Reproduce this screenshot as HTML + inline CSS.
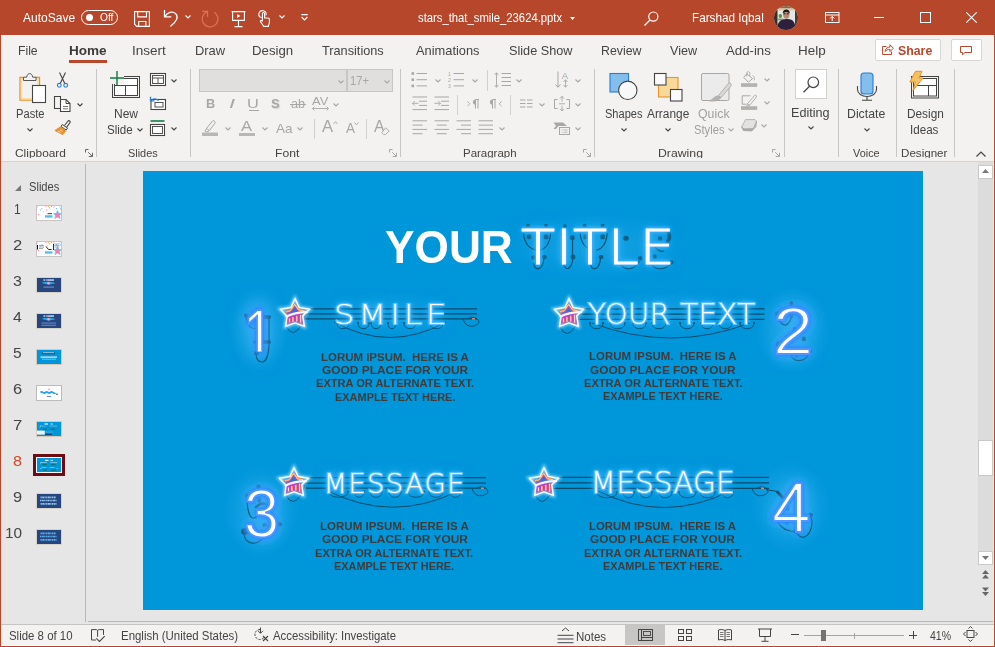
<!DOCTYPE html>
<html lang="en">
<head>
<meta charset="utf-8">
<title>stars_that_smile_23624.pptx - PowerPoint</title>
<style>
html,body{margin:0;padding:0;}
body{width:995px;height:647px;overflow:hidden;background:#f3f2f1;font-family:"Liberation Sans",sans-serif;color:#444;}
#win{position:relative;width:995px;height:647px;overflow:hidden;background:#f3f2f1;}
.abs{position:absolute;}
.t{position:absolute;white-space:nowrap;line-height:1;transform-origin:0 0;color:#444;}
svg{position:absolute;overflow:visible;}
#titlebar{position:absolute;left:0;top:0;width:995px;height:35px;background:#b7472a;}
#titlebar .t{color:#fff;}
#tabs{position:absolute;left:1px;top:35px;width:993px;height:32px;background:#f3f2f1;}
#ribbon{position:absolute;left:1px;top:67px;width:993px;height:94px;background:#f3f2f1;}
#work{position:absolute;left:1px;top:162px;width:993px;height:462px;background:#e6e6e6;}
#slide{position:absolute;left:143px;top:171px;width:780px;height:439px;background:#0096da;overflow:hidden;}
#status{position:absolute;left:1px;top:624px;width:993px;height:22px;background:#f3f2f1;}
.edge{position:absolute;background:#b7472a;}
</style>
</head>
<body>
<div id="win">

<!-- TITLE BAR -->
<div id="titlebar">
<span class="t" style="left:23.48px;top:11.00px;font-size:13px;transform:scaleX(0.9234);color:#fff;">AutoSave</span>
<div class="abs" style="left:81px;top:9.5px;width:35px;height:13px;border:1.2px solid #fff;border-radius:8px;"></div>
<div class="abs" style="left:85.5px;top:13.5px;width:7px;height:7px;background:#fff;border-radius:50%;"></div>
<span class="t" style="left:99.52px;top:11.69px;font-size:11px;transform:scaleX(0.9298);color:#fff;">Off</span>
<svg style="left:134px;top:11px" width="16" height="16" viewBox="0 0 16 16" fill="none" stroke="#fff" stroke-width="1.100"><path d="M0.600 0.600H15.400V15.400H2.800L0.600 13.200Z"/><path d="M3.700 0.600v5.300h8.800v-5.300"/><path d="M4.700 15.400v-4.900h7.200v4.900"/></svg>
<svg style="left:163px;top:9px" width="18" height="18" viewBox="0 0 18 18" fill="none" stroke="#fff" stroke-width="1.3" stroke-linecap="round" stroke-linejoin="round"><path d="M1.5 1.5v6.3h6.3"/><path d="M1.8 7.6C4.2 3.3 9.5 1.6 12.6 4.6c3 3 1.6 7.6-4.8 12.4"/></svg>
<svg style="left:185px;top:15px" width="6" height="4" viewBox="0 0 6 4" fill="none"><path d="M0.5 0.5l2.5 2.5l2.5-2.5" stroke="#fff" stroke-width="1.1"/></svg>
<svg style="left:202px;top:9px" width="17" height="18" viewBox="0 0 17 18" fill="none" stroke="#e0705a" stroke-width="1.200" stroke-linecap="butt" stroke-linejoin="miter"><path d="M12.300 3.300A7.900 7.900 0 1 1 5.500 2.500"/><path d="M0.300 2.400H5.500V7.800"/></svg>
<svg style="left:231px;top:10.5px" width="15" height="17" viewBox="0 0 15 17" fill="none" stroke="#fff" stroke-width="1.1"><path d="M0.6 0.6h13.8M1.6 0.6v8.8h11.8v-8.8M7.5 9.4v6M3.5 15.6h8"/><path d="M6.2 3v4l3.2-2z" fill="#fff" stroke="none"/></svg>
<svg style="left:258px;top:9px" width="12" height="18" viewBox="0 0 12 18" fill="none" stroke="#fff" stroke-width="1.1" stroke-linecap="round" stroke-linejoin="round"><path d="M3.2 8.6A3.6 3.6 0 1 1 8 6"/><path d="M4.4 12V4.6a1.1 1.1 0 0 1 2.2 0V9h3.2a1.6 1.6 0 0 1 1.6 1.6V13c0 2-1 3.4-1 4.4H5.6C5 15.6 3 13.8 2.4 12.600c-0.400-1 1-1.600 2-0.600z"/></svg>
<svg style="left:279px;top:15px" width="6" height="4" viewBox="0 0 6 4" fill="none"><path d="M0.5 0.5l2.5 2.5l2.5-2.5" stroke="#fff" stroke-width="1.1"/></svg>
<svg style="left:301px;top:14px" width="7" height="7" viewBox="0 0 7 7" fill="none" stroke="#fff" stroke-width="1.1"><path d="M0.3 0.6h6.4M0.6 3l2.9 2.9L6.4 3"/></svg>
<span class="t" style="left:418.00px;top:11.00px;font-size:13px;transform:scaleX(0.8670);color:#fff;">stars_that_smile_23624.pptx</span>
<svg style="left:570px;top:17px" width="5" height="3" viewBox="0 0 5 3" fill="none"><path d="M0 0h5L2.5 3z" fill="#fff"/></svg>
<svg style="left:644px;top:11px" width="15" height="15" viewBox="0 0 15 15" fill="none" stroke="#fff" stroke-width="1.2"><circle cx="9.3" cy="5.6" r="4.6"/><path d="M6 9l-5.5 5.5"/></svg>
<span class="t" style="left:692.04px;top:11.00px;font-size:13px;transform:scaleX(0.9024);color:#fff;">Farshad Iqbal</span>
<svg style="left:774px;top:6px" width="24" height="24" viewBox="0 0 24 24" fill="none"><defs><clipPath id="av"><circle cx="12" cy="12" r="12"/></clipPath></defs><g clip-path="url(#av)"><rect width="24" height="24" fill="#e4e8e4"/><rect width="24" height="2.500" fill="#8a6a48"/><rect y="2.500" width="24" height="2" fill="#d8c9a6"/><rect x="0" y="4" width="3.500" height="20" fill="#3c2c22"/><rect x="21" y="4" width="3" height="20" fill="#4a3a30"/><ellipse cx="6.300" cy="10" rx="1.800" ry="2" fill="#5f8a4a"/><rect x="3.500" y="12.500" width="6" height="2" fill="#7da06a"/><path d="M3 24c0-8 3-10.500 9.500-11s9 3 9 11z" fill="#2e1f3d"/><ellipse cx="12.300" cy="8.600" rx="3.200" ry="4.200" fill="#b48a72"/><path d="M8.800 7.500c-0.500-5.500 7.500-5.500 7 0c-1.500-2-5.500-2-7 0z" fill="#17171c"/><rect x="9.500" y="7.300" width="2" height="1" fill="#2a2024"/><rect x="12.800" y="7.300" width="2" height="1" fill="#2a2024"/></g></svg>
<svg style="left:825px;top:12px" width="15" height="11" viewBox="0 0 15 11" fill="none" stroke="#fff" stroke-width="1"><rect x="0.5" y="0.5" width="13.5" height="10"/><path d="M0.5 3h13.5"/><path d="M7.2 9V4.600M5.200 6.400l2-2l2 2"/></svg>
<div class="abs" style="left:874px;top:17px;width:10px;height:1px;background:#fff;"></div>
<div class="abs" style="left:920px;top:12px;width:9px;height:9px;border:1px solid #fff;"></div>
<svg style="left:966px;top:12px" width="11" height="11" viewBox="0 0 11 11" stroke="#fff" stroke-width="1.1"><path d="M0.3 0.3l10.4 10.4M10.7 0.3L0.3 10.7"/></svg>
</div>

<!-- TABS -->
<div id="tabs">
<span class="t" style="left:16.50px;top:9.20px;font-size:13px;transform:scaleX(0.9376);">File</span>
<span class="t" style="left:67.81px;top:9.20px;font-size:13px;transform:scaleX(1.0427);color:#3b3a39;font-weight:bold;">Home</span>
<div class="abs" style="left:68px;top:25px;width:38px;height:2.5px;background:#b7472a;"></div>
<span class="t" style="left:131.26px;top:9.20px;font-size:13px;transform:scaleX(1.0408);">Insert</span>
<span class="t" style="left:193.54px;top:9.20px;font-size:13px;transform:scaleX(0.9931);">Draw</span>
<span class="t" style="left:251.32px;top:9.20px;font-size:13px;transform:scaleX(1.0163);">Design</span>
<span class="t" style="left:321.22px;top:9.20px;font-size:13px;transform:scaleX(0.9784);">Transitions</span>
<span class="t" style="left:414.57px;top:9.20px;font-size:13px;transform:scaleX(0.9872);">Animations</span>
<span class="t" style="left:508.43px;top:9.20px;font-size:13px;transform:scaleX(0.9753);">Slide Show</span>
<span class="t" style="left:600.49px;top:9.20px;font-size:13px;transform:scaleX(0.9495);">Review</span>
<span class="t" style="left:668.95px;top:9.20px;font-size:13px;transform:scaleX(0.9705);">View</span>
<span class="t" style="left:725.27px;top:9.20px;font-size:13px;transform:scaleX(1.0163);">Add-ins</span>
<span class="t" style="left:797.40px;top:9.20px;font-size:13px;transform:scaleX(1.0341);">Help</span>
<div class="abs" style="left:873.5px;top:4px;width:66px;height:22px;background:#fff;border:1px solid #d8d6d4;border-radius:2px;box-sizing:border-box;"></div>
<svg style="left:881px;top:9px" width="12" height="11" viewBox="0 0 12 11" fill="none" stroke="#b7472a" stroke-width="1" stroke-linejoin="round"><path d="M4.5 2.5H0.6v8h9v-3"/><path d="M3 7.500c0.500-3 2.500-4.500 5-4.500V0.800l3.400 3.400L8 7.600V5.400c-2 0-3.800 0.600-5 2.100z"/></svg>
<span class="t" style="left:896.95px;top:9.20px;font-size:13px;transform:scaleX(0.9484);color:#b7472a;font-weight:bold;">Share</span>
<div class="abs" style="left:949.5px;top:4px;width:31px;height:22px;background:#fff;border:1px solid #d8d6d4;border-radius:2px;box-sizing:border-box;"></div>
<svg style="left:959px;top:11px" width="12" height="9" viewBox="0 0 12 9" fill="none" stroke="#b7472a" stroke-width="1" stroke-linejoin="round"><path d="M0.5 0.500h11v6h-6.500l-2.500 2.200v-2.200h-2z"/></svg>
</div>

<!-- RIBBON -->
<div id="ribbon">
<div class="abs" style="left:95px;top:2px;width:1px;height:88px;background:#c8c6c4;"></div>
<div class="abs" style="left:189px;top:2px;width:1px;height:88px;background:#c8c6c4;"></div>
<div class="abs" style="left:399px;top:2px;width:1px;height:88px;background:#c8c6c4;"></div>
<div class="abs" style="left:593px;top:2px;width:1px;height:88px;background:#c8c6c4;"></div>
<div class="abs" style="left:783px;top:2px;width:1px;height:88px;background:#c8c6c4;"></div>
<div class="abs" style="left:837px;top:2px;width:1px;height:88px;background:#c8c6c4;"></div>
<div class="abs" style="left:895px;top:2px;width:1px;height:88px;background:#c8c6c4;"></div>
<div class="abs" style="left:953px;top:2px;width:1px;height:88px;background:#c8c6c4;"></div>
<svg style="left:18px;top:6px" width="27" height="30" viewBox="0 0 27 30" fill="none">
<path d="M4 4.500H1V27.200H13" stroke="#e8912d" stroke-width="1.300"/>
<path d="M4 6H2.500V25.800H13" stroke="#fbdc9c" stroke-width="1.400"/>
<path d="M17 4.500h3.500V12" stroke="#e8912d" stroke-width="1.300"/>
<path d="M17 6h2V12" stroke="#fbdc9c" stroke-width="1.400"/>
<path d="M4.500 7.500V4.200h3.200C8 1.800 9.200 0.600 10.700 0.600S13.400 1.800 13.700 4.200H17V7.500z" stroke="#555" stroke-width="1" fill="#f3f2f1"/>
<rect x="13.500" y="12.500" width="13" height="17" stroke="#444" stroke-width="1.100" fill="#fff"/></svg>
<span class="t" style="left:14.79px;top:40.54px;font-size:12px;transform:scaleX(0.9290);">Paste</span>
<svg style="left:26px;top:61px" width="6" height="4" viewBox="0 0 6 4" fill="none"><path d="M0.5 0.5l2.5 2.5l2.5-2.5" stroke="#444" stroke-width="1.1"/></svg>
<svg style="left:56px;top:5px" width="11" height="16" viewBox="0 0 11 16" fill="none"><path d="M2.500 0.500L7.800 11.500M8.500 0.500L3.200 11.500" stroke="#444" stroke-width="1.100"/>
<circle cx="2.300" cy="13.300" r="1.900" stroke="#2b7cd3" stroke-width="1.100"/><circle cx="8.700" cy="13.300" r="1.900" stroke="#2b7cd3" stroke-width="1.100"/></svg>
<svg style="left:53px;top:29px" width="17" height="16" viewBox="0 0 17 16" fill="none"><path d="M6.500 3V0.500H0.500V12.500H6" stroke="#444" stroke-width="1.100"/>
<path d="M6.500 3.500h5.500l4 4v8h-9.500z" stroke="#444" stroke-width="1.100" fill="#fff"/><path d="M12 3.500v4h4" stroke="#444" stroke-width="1"/>
<path d="M9 10.500h5M9 12.800h5" stroke="#666" stroke-width="0.900"/></svg>
<svg style="left:76px;top:35.5px" width="6" height="4" viewBox="0 0 6 4" fill="none"><path d="M0.5 0.5l2.5 2.5l2.5-2.5" stroke="#444" stroke-width="1.1"/></svg>
<svg style="left:53px;top:53px" width="17" height="15" viewBox="0 0 17 15" fill="none"><path d="M10.500 5.500l3.500-4.500c1-1 2.800 0.400 2 1.600l-3.300 4.700" stroke="#444" stroke-width="1.100"/>
<path d="M8.300 4.500l5.200 3.600-1.300 2-5.200-3.600z" stroke="#444" stroke-width="1" fill="#f3f2f1"/>
<path d="M6.500 6.800L0.800 10.500l8 4.200l3-4z" fill="#e8912d" stroke="#e8912d" stroke-width="0.800" stroke-linejoin="round"/>
<path d="M4 11l2.500 1.500M6 9.800l2.500 1.500" stroke="#f3f2f1" stroke-width="0.700"/></svg>
<span class="t" style="left:14.10px;top:81.07px;font-size:11.5px;transform:scaleX(1.0353);">Clipboard</span>
<svg style="left:84px;top:82px" width="8" height="8" viewBox="0 0 8 8" fill="none" stroke="#666" stroke-width="1"><path d="M0.5 3.500V0.500H3.500M3.200 3.200L7.200 7.200M7.500 3.800v3.700H3.800"/></svg>
<svg style="left:109px;top:4px" width="30" height="28" viewBox="0 0 30 28" fill="none"><rect x="2.500" y="5.500" width="27" height="21" stroke="#444" stroke-width="1"/>
<rect x="4.500" y="7.500" width="23" height="17" stroke="#444" stroke-width="1" fill="#fff"/>
<path d="M4.500 14.500h23M15.500 14.500v10" stroke="#444" stroke-width="1"/>
<rect x="0" y="0" width="14" height="13" fill="#f3f2f1" stroke="none"/>
<path d="M7 0v14M0 7h14" stroke="#107c41" stroke-width="1.400"/></svg>
<span class="t" style="left:112.61px;top:40.54px;font-size:12px;transform:scaleX(1.0021);">New</span>
<span class="t" style="left:106.48px;top:56.64px;font-size:12px;transform:scaleX(0.9641);">Slide</span>
<svg style="left:136px;top:61px" width="6" height="4" viewBox="0 0 6 4" fill="none"><path d="M0.5 0.5l2.5 2.5l2.5-2.5" stroke="#444" stroke-width="1.1"/></svg>
<svg style="left:149px;top:6px" width="16" height="13" viewBox="0 0 16 13" fill="none"><rect x="0.500" y="0.500" width="15" height="12" stroke="#444" stroke-width="1.100" fill="#fff"/>
<rect x="2.500" y="2.500" width="11" height="8" stroke="#444" stroke-width="0.900"/><path d="M2.500 5h11M8 5v5.500" stroke="#444" stroke-width="0.900"/></svg>
<svg style="left:170px;top:12px" width="6" height="4" viewBox="0 0 6 4" fill="none"><path d="M0.5 0.5l2.5 2.5l2.5-2.5" stroke="#444" stroke-width="1.1"/></svg>
<svg style="left:149px;top:29px" width="16" height="14" viewBox="0 0 16 14" fill="none"><rect x="1" y="3.500" width="14.500" height="10" stroke="#444" stroke-width="1.100" fill="#fff"/>
<rect x="5" y="6.500" width="8" height="4.500" stroke="#444" stroke-width="0.900"/>
<path d="M8.500 4.500C6 2.500 3 2.500 1 4.500" stroke="#2b7cd3" stroke-width="1.300"/><path d="M0.500 0.800v4h4" stroke="#2b7cd3" stroke-width="1.300"/></svg>
<svg style="left:149px;top:53px" width="16" height="16" viewBox="0 0 16 16" fill="none"><path d="M0.500 1h14" stroke="#107c41" stroke-width="1.600"/>
<rect x="0.500" y="4.500" width="14" height="11" stroke="#444" stroke-width="1.100" fill="#fff"/><rect x="2.500" y="6.500" width="10" height="7" stroke="#444" stroke-width="0.900"/></svg>
<svg style="left:170px;top:60px" width="6" height="4" viewBox="0 0 6 4" fill="none"><path d="M0.5 0.5l2.5 2.5l2.5-2.5" stroke="#444" stroke-width="1.1"/></svg>
<span class="t" style="left:127.11px;top:81.07px;font-size:11.5px;transform:scaleX(0.9475);">Slides</span>
<div class="abs" style="left:198px;top:2px;width:148px;height:23px;background:#e1dfdd;border:1px solid #c8c6c4;box-sizing:border-box;"></div>
<div class="abs" style="left:346px;top:2px;width:46px;height:23px;background:#e1dfdd;border:1px solid #c8c6c4;box-sizing:border-box;"></div>
<svg style="left:336.5px;top:12.5px" width="6" height="4" viewBox="0 0 6 4" fill="none"><path d="M0.5 0.5l2.5 2.5l2.5-2.5" stroke="#a9a7a5" stroke-width="1.1"/></svg>
<span class="t" style="left:348.95px;top:7.54px;font-size:12px;transform:scaleX(0.9283);color:#a9a7a5;">17+</span>
<svg style="left:382.5px;top:12.5px" width="6" height="4" viewBox="0 0 6 4" fill="none"><path d="M0.5 0.5l2.5 2.5l2.5-2.5" stroke="#a9a7a5" stroke-width="1.1"/></svg>
<span class="t" style="left:204.66px;top:30.00px;font-size:13px;transform:scaleX(0.9820);color:#a9a7a5;font-weight:bold;">B</span>
<span class="t" style="left:227.64px;top:30.00px;font-size:13px;transform:scaleX(1.6869);color:#a9a7a5;font-style:italic;">I</span>
<span class="t" style="left:246.44px;top:30.00px;font-size:13px;transform:scaleX(1.2573);color:#a9a7a5;">U</span>
<div class="abs" style="left:247.5px;top:43px;width:10px;height:1px;background:#a9a7a5;"></div>
<span class="t" style="left:269.94px;top:30.30px;font-size:13px;transform:scaleX(0.9872);color:#a9a7a5;font-weight:bold;text-shadow:1px 1px 1px #d0cecc;">S</span>
<span class="t" style="left:289.97px;top:30.84px;font-size:12px;transform:scaleX(1.0528);color:#a9a7a5;">ab</span>
<div class="abs" style="left:289px;top:36.5px;width:16px;height:1px;background:#a9a7a5;"></div>
<span class="t" style="left:310.97px;top:28.69px;font-size:11px;transform:scaleX(1.1744);color:#a9a7a5;">AV</span>
<svg style="left:311px;top:39px" width="17" height="5" viewBox="0 0 17 5" fill="none"><path d="M0.500 2.500h16M2.500 0.500l-2 2l2 2M14.500 0.500l2 2l-2 2" stroke="#a9a7a5" stroke-width="0.900"/></svg>
<svg style="left:332px;top:36px" width="6" height="4" viewBox="0 0 6 4" fill="none"><path d="M0.5 0.5l2.5 2.5l2.5-2.5" stroke="#a9a7a5" stroke-width="1.1"/></svg>
<svg style="left:201px;top:52px" width="16" height="17" viewBox="0 0 16 17" fill="none"><path d="M4.500 9.500l6-7.500c1-1 3.500 0.800 2.500 2l-5.500 7.500z" stroke="#a9a7a5" stroke-width="1"/><path d="M4.500 9.500l-1.500 2.500l2 1l2.500-1.500" stroke="#a9a7a5" stroke-width="1"/>
<rect x="0" y="13.500" width="16" height="3.500" fill="#b9b7b5"/></svg>
<svg style="left:224px;top:60px" width="6" height="4" viewBox="0 0 6 4" fill="none"><path d="M0.5 0.5l2.5 2.5l2.5-2.5" stroke="#a9a7a5" stroke-width="1.1"/></svg>
<span class="t" style="left:240.47px;top:50.80px;font-size:15px;transform:scaleX(1.1061);color:#a9a7a5;">A</span>
<div class="abs" style="left:238px;top:65.5px;width:16px;height:3.5px;background:#b9b7b5;"></div>
<svg style="left:260.5px;top:60px" width="6" height="4" viewBox="0 0 6 4" fill="none"><path d="M0.5 0.5l2.5 2.5l2.5-2.5" stroke="#a9a7a5" stroke-width="1.1"/></svg>
<span class="t" style="left:275.47px;top:54.50px;font-size:13px;transform:scaleX(1.0387);color:#a9a7a5;">Aa</span>
<svg style="left:296px;top:60px" width="6" height="4" viewBox="0 0 6 4" fill="none"><path d="M0.5 0.5l2.5 2.5l2.5-2.5" stroke="#a9a7a5" stroke-width="1.1"/></svg>
<div class="abs" style="left:312.5px;top:52px;width:1px;height:20px;background:#d2d0ce;"></div>
<span class="t" style="left:320.97px;top:51.11px;font-size:17px;transform:scaleX(0.9760);color:#a9a7a5;">A</span>
<svg style="left:332px;top:54px" width="5" height="4" viewBox="0 0 5 4" fill="none"><path d="M0.500 3l2-2.300l2 2.300" stroke="#a9a7a5" stroke-width="0.900"/></svg>
<span class="t" style="left:344.57px;top:53.65px;font-size:14px;transform:scaleX(0.9588);color:#a9a7a5;">A</span>
<svg style="left:353px;top:55px" width="5" height="4" viewBox="0 0 5 4" fill="none"><path d="M0.500 0.500l2 2.300l2-2.300" stroke="#a9a7a5" stroke-width="0.900"/></svg>
<div class="abs" style="left:365px;top:52px;width:1px;height:20px;background:#d2d0ce;"></div>
<span class="t" style="left:372.97px;top:51.11px;font-size:17px;transform:scaleX(0.9316);color:#a9a7a5;">A</span>
<svg style="left:380px;top:60px" width="9" height="8" viewBox="0 0 9 8" fill="none"><path d="M4.500 0.800l3.700 3.200l-3.700 3.500h-2l-1.800-1.600z" stroke="#a9a7a5" stroke-width="0.900" fill="#f3f2f1"/></svg>
<span class="t" style="left:273.51px;top:81.07px;font-size:11.5px;transform:scaleX(1.0551);">Font</span>
<svg style="left:388px;top:82px" width="8" height="8" viewBox="0 0 8 8" fill="none" stroke="#a8a6a4" stroke-width="1"><path d="M0.5 3.500V0.500H3.500M3.200 3.200L7.200 7.200M7.500 3.800v3.700H3.800"/></svg>
<svg style="left:410px;top:5px" width="17" height="16" viewBox="0 0 17 16" fill="none"><rect x="0.500" y="0.2" width="2.600" height="2.600" fill="#a9a7a5"/><path d="M5.500 1.5h10.500" stroke="#a9a7a5" stroke-width="1"/><rect x="0.500" y="6.4" width="2.600" height="2.600" fill="#a9a7a5"/><path d="M5.500 7.7h10.500" stroke="#a9a7a5" stroke-width="1"/><rect x="0.500" y="12.6" width="2.600" height="2.600" fill="#a9a7a5"/><path d="M5.500 13.9h10.500" stroke="#a9a7a5" stroke-width="1"/></svg>
<svg style="left:434px;top:12px" width="6" height="4" viewBox="0 0 6 4" fill="none"><path d="M0.5 0.5l2.5 2.5l2.5-2.5" stroke="#a9a7a5" stroke-width="1.1"/></svg>
<svg style="left:447px;top:5px" width="17" height="16" viewBox="0 0 17 16" fill="none"><path d="M5.500 1.5h10.500" stroke="#a9a7a5" stroke-width="1"/><path d="M5.500 7.7h10.500" stroke="#a9a7a5" stroke-width="1"/><path d="M5.500 13.9h10.500" stroke="#a9a7a5" stroke-width="1"/><text x="0" y="3.800" font-size="5" fill="#a9a7a5" font-family="Liberation Sans, sans-serif">1</text><text x="0" y="10" font-size="5" fill="#a9a7a5" font-family="Liberation Sans, sans-serif">2</text><text x="0" y="16.200" font-size="5" fill="#a9a7a5" font-family="Liberation Sans, sans-serif">3</text></svg>
<svg style="left:471px;top:12px" width="6" height="4" viewBox="0 0 6 4" fill="none"><path d="M0.5 0.5l2.5 2.5l2.5-2.5" stroke="#a9a7a5" stroke-width="1.1"/></svg>
<div class="abs" style="left:486px;top:3px;width:1px;height:21px;background:#d2d0ce;"></div>
<svg style="left:493px;top:5px" width="18" height="16" viewBox="0 0 18 16" fill="none"><path d="M2.500 1v14M0.500 3l2-2.300l2 2.300M0.500 13l2 2.300l2-2.300" stroke="#a9a7a5" stroke-width="0.900"/><path d="M7.500 1.5h9.500" stroke="#a9a7a5" stroke-width="1"/><path d="M7.500 5.5h9.500" stroke="#a9a7a5" stroke-width="1"/><path d="M7.500 9.5h9.500" stroke="#a9a7a5" stroke-width="1"/><path d="M7.500 13.5h9.500" stroke="#a9a7a5" stroke-width="1"/></svg>
<svg style="left:515px;top:12px" width="6" height="4" viewBox="0 0 6 4" fill="none"><path d="M0.5 0.5l2.5 2.5l2.5-2.5" stroke="#a9a7a5" stroke-width="1.1"/></svg>
<svg style="left:554px;top:4px" width="15" height="18" viewBox="0 0 15 18" fill="none"><path d="M3 0.500v15.500M0.500 13.500l2.500 2.800l2.500-2.800" stroke="#a9a7a5" stroke-width="1"/><path d="M10.500 9v7M8.500 11l2-2.300l2 2.300M8.500 14l2 2.300l2-2.300" stroke="#a9a7a5" stroke-width="0.900"/><text x="6.800" y="8" font-size="9.500" fill="#a9a7a5" font-family="Liberation Sans, sans-serif">A</text></svg>
<svg style="left:574px;top:12px" width="6" height="4" viewBox="0 0 6 4" fill="none"><path d="M0.5 0.5l2.5 2.5l2.5-2.5" stroke="#a9a7a5" stroke-width="1.1"/></svg>
<svg style="left:411px;top:29px" width="16" height="15" viewBox="0 0 16 15" fill="none"><path d="M0.5 1.0h14.5" stroke="#a9a7a5" stroke-width="1"/><path d="M7 5.2h8" stroke="#a9a7a5" stroke-width="1"/><path d="M7 9.4h8" stroke="#a9a7a5" stroke-width="1"/><path d="M0.5 13.600000000000001h14.5" stroke="#a9a7a5" stroke-width="1"/><path d="M0.500 7.300h6M2.800 5l-2.300 2.300l2.300 2.300" stroke="#a9a7a5" stroke-width="0.900"/></svg>
<svg style="left:433px;top:29px" width="16" height="15" viewBox="0 0 16 15" fill="none"><path d="M0.5 1.0h14.5" stroke="#a9a7a5" stroke-width="1"/><path d="M7 5.2h8" stroke="#a9a7a5" stroke-width="1"/><path d="M7 9.4h8" stroke="#a9a7a5" stroke-width="1"/><path d="M0.5 13.600000000000001h14.5" stroke="#a9a7a5" stroke-width="1"/><path d="M0.500 7.300h6M4.200 5l2.300 2.300l-2.300 2.300" stroke="#a9a7a5" stroke-width="0.900"/></svg>
<div class="abs" style="left:456px;top:27.5px;width:1px;height:20px;background:#d2d0ce;"></div>
<svg style="left:466px;top:32px" width="13" height="10" viewBox="0 0 13 10" fill="none"><path d="M0.500 2.500l2.300 2.300l-2.300 2.300" stroke="#a9a7a5" stroke-width="0.900"/><path d="M8.500 9.500v-9h3.500M11 0.500v9" stroke="#a9a7a5" stroke-width="1"/><path d="M8.500 0.500a2.600 2.600 0 0 0 0 5.200z" fill="#a9a7a5"/></svg>
<svg style="left:488px;top:32px" width="13" height="10" viewBox="0 0 13 10" fill="none"><path d="M12.500 2.500l-2.300 2.300l2.300 2.300" stroke="#a9a7a5" stroke-width="0.900"/><path d="M3.500 9.500v-9h3.500M6 0.500v9" stroke="#a9a7a5" stroke-width="1"/><path d="M3.500 0.500a2.600 2.600 0 0 0 0 5.200z" fill="#a9a7a5"/></svg>
<div class="abs" style="left:509px;top:27.5px;width:1px;height:20px;background:#d2d0ce;"></div>
<svg style="left:519px;top:32px" width="13" height="9" viewBox="0 0 13 9" fill="none"><path d="M0 1h5.500M7 1h5.500" stroke="#a9a7a5" stroke-width="1"/><path d="M0 4.5h5.500M7 4.5h5.500" stroke="#a9a7a5" stroke-width="1"/><path d="M0 8h5.500M7 8h5.500" stroke="#a9a7a5" stroke-width="1"/></svg>
<svg style="left:537.5px;top:35.5px" width="6" height="4" viewBox="0 0 6 4" fill="none"><path d="M0.5 0.5l2.5 2.5l2.5-2.5" stroke="#a9a7a5" stroke-width="1.1"/></svg>
<svg style="left:553px;top:29px" width="16" height="15" viewBox="0 0 16 15" fill="none"><path d="M3.500 3.500h-3v9h3M12.500 3.500h3v9h-3" stroke="#a9a7a5" stroke-width="1"/><path d="M8 0.500v5M6 2.500l2-2.200l2 2.200M8 14.800v-5M6 12.800l2 2.200l2-2.200M5 7.800h6" stroke="#a9a7a5" stroke-width="0.900"/></svg>
<svg style="left:574px;top:36px" width="6" height="4" viewBox="0 0 6 4" fill="none"><path d="M0.5 0.5l2.5 2.5l2.5-2.5" stroke="#a9a7a5" stroke-width="1.1"/></svg>
<svg style="left:411px;top:53px" width="16" height="15" viewBox="0 0 16 15" fill="none"><path d="M0.5 0.8h14.5" stroke="#a9a7a5" stroke-width="1"/><path d="M0.5 5.1h10" stroke="#a9a7a5" stroke-width="1"/><path d="M0.5 9.4h14.5" stroke="#a9a7a5" stroke-width="1"/><path d="M0.5 13.7h10" stroke="#a9a7a5" stroke-width="1"/></svg>
<svg style="left:433px;top:53px" width="16" height="15" viewBox="0 0 16 15" fill="none"><path d="M0.5 0.8h14.5" stroke="#a9a7a5" stroke-width="1"/><path d="M2.8 5.1h10" stroke="#a9a7a5" stroke-width="1"/><path d="M0.5 9.4h14.5" stroke="#a9a7a5" stroke-width="1"/><path d="M2.8 13.7h10" stroke="#a9a7a5" stroke-width="1"/></svg>
<svg style="left:455px;top:53px" width="16" height="15" viewBox="0 0 16 15" fill="none"><path d="M0.5 0.8h14.5" stroke="#a9a7a5" stroke-width="1"/><path d="M5 5.1h10" stroke="#a9a7a5" stroke-width="1"/><path d="M0.5 9.4h14.5" stroke="#a9a7a5" stroke-width="1"/><path d="M5 13.7h10" stroke="#a9a7a5" stroke-width="1"/></svg>
<svg style="left:477px;top:53px" width="16" height="15" viewBox="0 0 16 15" fill="none"><path d="M0.5 0.8h14.5" stroke="#a9a7a5" stroke-width="1"/><path d="M0.5 5.1h14.5" stroke="#a9a7a5" stroke-width="1"/><path d="M0.5 9.4h14.5" stroke="#a9a7a5" stroke-width="1"/><path d="M0.5 13.7h14.5" stroke="#a9a7a5" stroke-width="1"/></svg>
<svg style="left:497.5px;top:60px" width="6" height="4" viewBox="0 0 6 4" fill="none"><path d="M0.5 0.5l2.5 2.5l2.5-2.5" stroke="#a9a7a5" stroke-width="1.1"/></svg>
<svg style="left:552px;top:55px" width="17" height="13" viewBox="0 0 17 13" fill="none"><path d="M0.500 0.500h9.500l4 3.500h-8.500l-2.500 3h-2.500l2.500-3z" fill="#a9a7a5"/><rect x="6.500" y="5.500" width="10" height="7" stroke="#a9a7a5" stroke-width="1" fill="#f3f2f1"/><path d="M8.500 8h1M10.500 8h4M8.500 10.300h1M10.500 10.300h4" stroke="#a9a7a5" stroke-width="0.800"/></svg>
<svg style="left:574px;top:60px" width="6" height="4" viewBox="0 0 6 4" fill="none"><path d="M0.5 0.5l2.5 2.5l2.5-2.5" stroke="#a9a7a5" stroke-width="1.1"/></svg>
<span class="t" style="left:461.76px;top:81.07px;font-size:11.5px;transform:scaleX(0.9976);">Paragraph</span>
<svg style="left:582px;top:82px" width="8" height="8" viewBox="0 0 8 8" fill="none" stroke="#a8a6a4" stroke-width="1"><path d="M0.5 3.500V0.500H3.500M3.200 3.200L7.200 7.200M7.500 3.800v3.700H3.800"/></svg>
<svg style="left:608px;top:6px" width="30" height="28" viewBox="0 0 30 28" fill="none"><rect x="1" y="0.500" width="18.500" height="18.500" fill="#83beec" stroke="#2b7cd3" stroke-width="1.100"/><circle cx="18.800" cy="17.300" r="9.200" fill="#f8f8f8" stroke="#444" stroke-width="1.100"/></svg>
<span class="t" style="left:603.50px;top:40.54px;font-size:12px;transform:scaleX(0.9212);">Shapes</span>
<svg style="left:619.5px;top:61px" width="6" height="4" viewBox="0 0 6 4" fill="none"><path d="M0.5 0.5l2.5 2.5l2.5-2.5" stroke="#444" stroke-width="1.1"/></svg>
<svg style="left:652px;top:5px" width="30" height="30" viewBox="0 0 30 30" fill="none"><rect x="5.500" y="5.500" width="19.500" height="19.500" fill="#f8d999" stroke="#e8912d" stroke-width="1.100"/><rect x="1.500" y="1.500" width="11.500" height="11.500" fill="#fafafa" stroke="#444" stroke-width="1.100"/><rect x="17.500" y="17.500" width="11.500" height="11.500" fill="#fafafa" stroke="#444" stroke-width="1.100"/></svg>
<span class="t" style="left:646.28px;top:40.54px;font-size:12px;transform:scaleX(0.9895);">Arrange</span>
<svg style="left:663.5px;top:61px" width="6" height="4" viewBox="0 0 6 4" fill="none"><path d="M0.5 0.5l2.5 2.5l2.5-2.5" stroke="#444" stroke-width="1.1"/></svg>
<svg style="left:700px;top:6px" width="30" height="29" viewBox="0 0 30 29" fill="none"><rect x="0.500" y="0.500" width="27.500" height="27" rx="1.500" fill="#ebebeb" stroke="#a9a7a5" stroke-width="1"/><path d="M29.200 10.200c1.300 0.700 1.300 1.800 0.600 3l-9.800 11.400l-2.600-1.900l9.600-11.600c0.700-0.900 1.500-1.200 2.200-0.900z" fill="#dcdad8" stroke="#a9a7a5" stroke-width="0.900"/><path d="M17.400 22.700l2.600 1.900c-1.300 2.800-6 4.200-11.800 3.300c3.600-0.800 4.800-5.400 9.200-5.200z" fill="#b5b3b1" stroke="#a9a7a5" stroke-width="0.500"/></svg>
<span class="t" style="left:697.42px;top:40.54px;font-size:12px;transform:scaleX(1.0288);color:#a19f9d;">Quick</span>
<span class="t" style="left:692.50px;top:56.64px;font-size:12px;transform:scaleX(0.9336);color:#a19f9d;">Styles</span>
<svg style="left:727px;top:61px" width="6" height="4" viewBox="0 0 6 4" fill="none"><path d="M0.5 0.5l2.5 2.5l2.5-2.5" stroke="#a9a7a5" stroke-width="1.1"/></svg>
<svg style="left:740px;top:4px" width="17" height="16" viewBox="0 0 17 16" fill="none"><path d="M5.800 2.800l5.700 4.800l-4.200 3.600l-4.600-4.900z" stroke="#a9a7a5" stroke-width="1" stroke-linejoin="round"/><path d="M5.800 5.500V2.200c0-2 3-2 3 0v2.500" stroke="#a9a7a5" stroke-width="0.900"/><path d="M11.600 4.500c1.600 0.600 2.300 2.500 1.400 5" stroke="#a9a7a5" stroke-width="0.900"/><rect x="0" y="12.200" width="16.200" height="3.700" fill="#b5b1ae"/></svg>
<svg style="left:762.5px;top:11px" width="6" height="4" viewBox="0 0 6 4" fill="none"><path d="M0.5 0.5l2.5 2.5l2.5-2.5" stroke="#a9a7a5" stroke-width="1.1"/></svg>
<svg style="left:740px;top:27px" width="17" height="16" viewBox="0 0 17 16" fill="none"><path d="M9.500 1.800H1.200v8.400h4" stroke="#a9a7a5" stroke-width="1"/><path d="M6.300 9.800l7.300-8.300c0.900-0.900 2.600 0.300 1.800 1.500l-6.600 8.200l-3 1.100z" stroke="#a9a7a5" stroke-width="0.900" fill="#f3f2f1" stroke-linejoin="round"/><path d="M6.300 9.800l2.500 1.400" stroke="#a9a7a5" stroke-width="0.700"/><rect x="0" y="12.200" width="16.200" height="3.700" fill="#b5b1ae"/></svg>
<svg style="left:762.5px;top:34px" width="6" height="4" viewBox="0 0 6 4" fill="none"><path d="M0.5 0.5l2.5 2.5l2.5-2.5" stroke="#a9a7a5" stroke-width="1.1"/></svg>
<svg style="left:740px;top:52px" width="16" height="13" viewBox="0 0 16 13" fill="none"><path d="M4.600 0.600h9.400l1.600 1.700l-3.300 7.500l-9.300 0.200l-2.400-2z" fill="#e4e2e0" stroke="#a9a7a5" stroke-width="0.800" stroke-linejoin="round"/><path d="M0.600 8l2.400 2l9.300-0.200l-1.700 2.200l-8.200-0.300z" fill="#a8a6a4" stroke="#a9a7a5" stroke-width="0.700" stroke-linejoin="round"/><path d="M12.300 9.800l3.300-7.500l-0.700 5.700l-4.300 4z" fill="#c4c2c0" stroke="#a9a7a5" stroke-width="0.700" stroke-linejoin="round"/></svg>
<svg style="left:760px;top:57px" width="6" height="4" viewBox="0 0 6 4" fill="none"><path d="M0.5 0.5l2.5 2.5l2.5-2.5" stroke="#a9a7a5" stroke-width="1.1"/></svg>
<span class="t" style="left:657.29px;top:81.07px;font-size:11.5px;transform:scaleX(1.0666);">Drawing</span>
<svg style="left:771px;top:82px" width="8" height="8" viewBox="0 0 8 8" fill="none" stroke="#a8a6a4" stroke-width="1"><path d="M0.5 3.500V0.500H3.500M3.200 3.200L7.200 7.200M7.500 3.800v3.700H3.800"/></svg>
<div class="abs" style="left:794px;top:2px;width:32px;height:30px;background:#fff;border:1px solid #d2d0ce;box-sizing:border-box;"></div>
<svg style="left:802px;top:9px" width="17" height="17" viewBox="0 0 17 17" fill="none"><circle cx="10.300" cy="6.300" r="5.300" stroke="#444" stroke-width="1.200"/><path d="M6.500 10.300L0.500 16.300" stroke="#444" stroke-width="1.300"/></svg>
<span class="t" style="left:790.47px;top:39.84px;font-size:12px;transform:scaleX(1.0506);">Editing</span>
<svg style="left:806.5px;top:59px" width="6" height="4" viewBox="0 0 6 4" fill="none"><path d="M0.5 0.5l2.5 2.5l2.5-2.5" stroke="#444" stroke-width="1.1"/></svg>
<svg style="left:856px;top:5px" width="20" height="30" viewBox="0 0 20 30" fill="none"><rect x="4" y="1" width="12" height="21" rx="3" fill="#83beec" stroke="#2b7cd3" stroke-width="1.100"/><path d="M0.500 14v3.500a9.500 7 0 0 0 19 0V14M10 24.500v3.500M5 28.300h10" stroke="#444" stroke-width="1.100"/></svg>
<span class="t" style="left:846.29px;top:40.54px;font-size:12px;transform:scaleX(1.0242);">Dictate</span>
<svg style="left:863px;top:61px" width="6" height="4" viewBox="0 0 6 4" fill="none"><path d="M0.5 0.5l2.5 2.5l2.5-2.5" stroke="#444" stroke-width="1.1"/></svg>
<span class="t" style="left:852.26px;top:81.07px;font-size:11.5px;transform:scaleX(0.9464);">Voice</span>
<svg style="left:908px;top:4px" width="30" height="28" viewBox="0 0 30 28" fill="none"><rect x="2.500" y="5.500" width="27" height="21.500" stroke="#444" stroke-width="1"/><rect x="4.500" y="7.500" width="23" height="17.500" stroke="#444" stroke-width="1" fill="#fff"/><path d="M4.500 14.500h23M19.500 14.500v10.500" stroke="#444" stroke-width="1"/><path d="M6.500 0.300h6.500l-3 6.700h4L4 19.500l2.300-8.500H0.800z" fill="#f7c15c" stroke="#e8912d" stroke-width="1" stroke-linejoin="round"/></svg>
<span class="t" style="left:905.63px;top:40.54px;font-size:12px;transform:scaleX(0.9858);">Design</span>
<span class="t" style="left:909.13px;top:56.64px;font-size:12px;transform:scaleX(0.9671);">Ideas</span>
<span class="t" style="left:899.55px;top:81.07px;font-size:11.5px;transform:scaleX(1.0090);">Designer</span>
<svg style="left:975px;top:84px" width="10" height="6" viewBox="0 0 10 6" fill="none"><path d="M0.500 5.500l4.500-4.500l4.500 4.500" stroke="#444" stroke-width="1.200"/></svg>
<div class="abs" style="left:0px;top:90.80000000000001px;width:993px;height:3.2px;background:#f3f2f1;"></div>
</div>
<div class="abs" style="left:1px;top:161px;width:993px;height:1px;background:#d6d4d2;"></div>

<!-- WORKSPACE -->
<div id="work">
<div class="abs" style="left:84px;top:2px;width:1px;height:458px;background:#b8b6b4;"></div>
<div class="abs" style="left:87px;top:459px;width:905px;height:1px;background:#bab8b6;"></div>
<svg style="left:14px;top:23px" width="6" height="6" viewBox="0 0 6 6" fill="none"><path d="M6 0v6H0z" fill="#777"/></svg>
<span class="t" style="left:28.00px;top:17.70px;font-size:13px;transform:scaleX(0.8557);">Slides</span>
<span class="t" style="left:12.79px;top:40.23px;font-size:14.5px;transform:scaleX(0.8301);color:#444;">1</span>
<span class="t" style="left:11.57px;top:76.23px;font-size:14.5px;transform:scaleX(1.1494);color:#444;">2</span>
<span class="t" style="left:11.79px;top:112.23px;font-size:14.5px;transform:scaleX(1.1034);color:#444;">3</span>
<span class="t" style="left:11.85px;top:148.23px;font-size:14.5px;transform:scaleX(1.0925);color:#444;">4</span>
<span class="t" style="left:11.98px;top:184.23px;font-size:14.5px;transform:scaleX(1.0744);color:#444;">5</span>
<span class="t" style="left:11.58px;top:220.23px;font-size:14.5px;transform:scaleX(1.1320);color:#444;">6</span>
<span class="t" style="left:11.55px;top:256.23px;font-size:14.5px;transform:scaleX(1.1520);color:#444;">7</span>
<span class="t" style="left:11.70px;top:292.23px;font-size:14.5px;transform:scaleX(1.1152);color:#d24726;">8</span>
<span class="t" style="left:11.64px;top:328.23px;font-size:14.5px;transform:scaleX(1.1320);color:#444;">9</span>
<span class="t" style="left:3.53px;top:364.23px;font-size:14.5px;transform:scaleX(1.0573);color:#444;">10</span>
<svg style="left:35px;top:43px" width="26" height="16" viewBox="0 0 26 16" fill="none"><rect x="0.500" y="0.500" width="25" height="15" fill="#fff" stroke="#c8c6c4" stroke-width="1"/><rect x="2" y="9" width="0.900" height="0.900" fill="#ff5c8a"/><rect x="4" y="4.5" width="0.900" height="0.900" fill="#4aa8ee"/><rect x="5.5" y="3" width="0.900" height="0.900" fill="#4aa8ee"/><rect x="7" y="6" width="0.900" height="0.900" fill="#ff9db8"/><rect x="10.5" y="4.5" width="0.900" height="0.900" fill="#ff3d6e"/><rect x="13" y="2.5" width="0.900" height="0.900" fill="#4aa8ee"/><rect x="9.5" y="1.2" width="0.900" height="0.900" fill="#ff5c8a"/><rect x="12" y="1.2" width="0.900" height="0.900" fill="#ffa23d"/><rect x="15" y="1.2" width="0.900" height="0.900" fill="#c65cff"/><rect x="17.5" y="1.5" width="0.900" height="0.900" fill="#ff3d6e"/><rect x="20" y="3" width="0.900" height="0.900" fill="#4aa8ee"/><rect x="23.5" y="1.5" width="0.900" height="0.900" fill="#4aa8ee"/><rect x="24" y="3.5" width="0.900" height="0.900" fill="#4aa8ee"/><rect x="1.2" y="1.5" width="0.900" height="0.900" fill="#6fc3f2"/><path d="M21.500 5.500l1.200 2.800l2.800 0.300l-2.100 2l0.700 3l-2.600-1.600l-2.600 1.600l0.700-3l-2.100-2l2.800-0.300z" fill="#f27fb0" stroke="#6fc3f2" stroke-width="0.800"/><rect x="9" y="10.300" width="7.500" height="2.300" fill="#55bdf0"/><rect x="11.500" y="8" width="4.500" height="1.200" fill="#6b5a5a"/></svg>
<svg style="left:35px;top:79px" width="26" height="16" viewBox="0 0 26 16" fill="none"><rect x="0.500" y="0.500" width="25" height="15" fill="#fff" stroke="#c8c6c4" stroke-width="1"/><rect x="2" y="9" width="0.900" height="0.900" fill="#ff5c8a"/><rect x="4" y="4.5" width="0.900" height="0.900" fill="#4aa8ee"/><rect x="5.5" y="3" width="0.900" height="0.900" fill="#4aa8ee"/><rect x="7" y="6" width="0.900" height="0.900" fill="#ff9db8"/><rect x="10.5" y="4.5" width="0.900" height="0.900" fill="#ff3d6e"/><rect x="13" y="2.5" width="0.900" height="0.900" fill="#4aa8ee"/><rect x="9.5" y="1.2" width="0.900" height="0.900" fill="#ff5c8a"/><rect x="12" y="1.2" width="0.900" height="0.900" fill="#ffa23d"/><rect x="15" y="1.2" width="0.900" height="0.900" fill="#c65cff"/><rect x="17.5" y="1.5" width="0.900" height="0.900" fill="#ff3d6e"/><rect x="20" y="3" width="0.900" height="0.900" fill="#4aa8ee"/><rect x="23.5" y="1.5" width="0.900" height="0.900" fill="#4aa8ee"/><rect x="24" y="3.5" width="0.900" height="0.900" fill="#4aa8ee"/><rect x="1.2" y="1.5" width="0.900" height="0.900" fill="#6fc3f2"/><path d="M21.500 5.500l1.200 2.800l2.800 0.300l-2.100 2l0.700 3l-2.600-1.600l-2.600 1.600l0.700-3l-2.100-2l2.800-0.300z" fill="#f27fb0" stroke="#6fc3f2" stroke-width="0.800"/><rect x="9" y="10.300" width="7.500" height="2.300" fill="#55bdf0"/><path d="M1.500 4v4.500" stroke="#111" stroke-width="1"/><path d="M3 4.500h5M3 6h5M3 7.500h4" stroke="#9a9488" stroke-width="0.800"/><path d="M10 5.500l2.500 3h3M17.500 3v6" stroke="#111" stroke-width="0.900"/><path d="M18.500 3h5M18.500 4.500h5M18.500 6h5" stroke="#8f9aa8" stroke-width="0.800"/></svg>
<svg style="left:35px;top:115px" width="26" height="16" viewBox="0 0 26 16" fill="none"><rect x="0.500" y="0.500" width="25" height="15" fill="#27467e" stroke="#d6d2ca" stroke-width="1"/><rect x="7.500" y="2.400" width="10.500" height="1.300" fill="#dfe9fb"/><rect x="9" y="2.400" width="1.500" height="1.300" fill="#27467e"/><rect x="11" y="2.400" width="1.200" height="1.300" fill="#e05a9a"/><path d="M5.500 5.500c4-1 10-1 14 0.800c-4 1.500-9 1.800-14-0.800z" fill="#2aa3e6"/><circle cx="12.500" cy="6.300" r="1.300" fill="#f7a8d0"/><rect x="7.500" y="9.600" width="10.500" height="1" fill="#6f94d6"/></svg>
<svg style="left:35px;top:151px" width="26" height="16" viewBox="0 0 26 16" fill="none"><rect x="0.500" y="0.500" width="25" height="15" fill="#27467e" stroke="#d6d2ca" stroke-width="1"/><rect x="7.500" y="2.400" width="10.500" height="1.300" fill="#dfe9fb"/><rect x="9" y="2.400" width="1.500" height="1.300" fill="#27467e"/><rect x="11" y="2.400" width="1.200" height="1.300" fill="#e05a9a"/><path d="M5.500 5.500c4-1 10-1 14 0.800c-4 1.500-9 1.800-14-0.800z" fill="#2aa3e6"/><circle cx="12.500" cy="6.300" r="1.300" fill="#f7a8d0"/><rect x="5.500" y="9.600" width="14.500" height="0.900" fill="#6f94d6"/><rect x="5.500" y="11.800" width="14.500" height="0.900" fill="#6f94d6"/></svg>
<svg style="left:35px;top:187px" width="26" height="16" viewBox="0 0 26 16" fill="none"><rect x="0.500" y="0.500" width="25" height="15" fill="#0096da" stroke="#d6c8b8" stroke-width="1"/><path d="M6 4.300h13" stroke="#1b5f8c" stroke-width="2"/><path d="M7 3.600h11" stroke="#bfe6fa" stroke-width="0.700"/><rect x="4.500" y="7.500" width="16.500" height="1.200" fill="#d9f0fc"/><rect x="6" y="9.700" width="14" height="0.900" fill="#7fcaf0"/></svg>
<svg style="left:35px;top:223px" width="26" height="16" viewBox="0 0 26 16" fill="none"><rect x="0.500" y="0.500" width="25" height="15" fill="#fff" stroke="#bdbbb9" stroke-width="1"/><path d="M4.500 7.500c2-2 3 2 5 0s3 2 5 0s3 2 5 0.500" stroke="#2aa3e6" stroke-width="1.800"/><path d="M13 3.500v2" stroke="#e05a9a" stroke-width="0.800"/><circle cx="21" cy="9.300" r="0.800" fill="#333"/><rect x="11" y="11" width="4" height="0.800" fill="#3b6fd0"/></svg>
<svg style="left:35px;top:259px" width="26" height="16" viewBox="0 0 26 16" fill="none"><rect x="0.500" y="0.500" width="25" height="15" fill="#0096da" stroke="#d6c8b8" stroke-width="1"/><rect x="8.500" y="2.400" width="3.500" height="1.200" fill="#e8f6fe"/><rect x="14.500" y="2.400" width="2.500" height="1.200" fill="#9ed8f6"/><path d="M3.500 6l2-1.500" stroke="#d9f0fc" stroke-width="0.800"/><rect x="6" y="4.800" width="3.500" height="0.800" fill="#55bdf0"/><rect x="13.500" y="4.600" width="7.500" height="0.900" fill="#55bdf0"/><rect x="6.500" y="7.600" width="4" height="1.100" fill="#1d6b58"/><rect x="14.500" y="7.600" width="4.500" height="1.100" fill="#1d6b58"/><rect x="0.800" y="9.600" width="8" height="4" fill="#f4f0ea"/><rect x="9.500" y="10.600" width="7.500" height="0.900" fill="#49b1ec"/><rect x="9" y="12.700" width="7" height="1.100" fill="#123c5e"/></svg>
<div class="abs" style="left:32px;top:292px;width:32px;height:22px;border:3px solid #6f0b12;box-sizing:border-box;background:#fff;"></div>
<svg style="left:36px;top:296px" width="24" height="14" viewBox="0 0 24 14" fill="none"><rect width="24" height="14" fill="#0096da"/><rect x="8" y="1.800" width="3.500" height="1.200" fill="#e8f6fe"/><rect x="13.500" y="1.800" width="2.500" height="1.200" fill="#9ed8f6"/><path d="M3.200 5.200l1.500-1" stroke="#d9f0fc" stroke-width="0.900"/><rect x="5" y="4.200" width="5" height="0.800" fill="#7fcaf0"/><rect x="13" y="4.200" width="7.500" height="0.800" fill="#7fcaf0"/><rect x="5.500" y="6.200" width="4.500" height="1" fill="#1d6b58"/><rect x="14" y="6.200" width="4.500" height="1" fill="#1d6b58"/><rect x="4.500" y="9.200" width="5" height="0.800" fill="#7fcaf0"/><rect x="12.500" y="9.200" width="5" height="0.800" fill="#7fcaf0"/><path d="M3.500 11l0.500-0.800M20 10.200l0.500 0.800" stroke="#d9f0fc" stroke-width="0.800"/><rect x="6" y="11.600" width="4" height="1" fill="#1d6b58"/><rect x="14" y="11.600" width="4.500" height="1" fill="#1d6b58"/></svg>
<svg style="left:35px;top:331px" width="26" height="16" viewBox="0 0 26 16" fill="none"><rect x="0.500" y="0.500" width="25" height="15" fill="#27467e" stroke="#d6d2ca" stroke-width="1"/><path d="M4.500 4.300h15.500M4 7.500h17M4.500 10.800h16" stroke="#8ec9f3" stroke-width="1.700" stroke-dasharray="1.300 0.500 2 0.400 0.900 0.500"/></svg>
<svg style="left:35px;top:367px" width="26" height="16" viewBox="0 0 26 16" fill="none"><rect x="0.500" y="0.500" width="25" height="15" fill="#27467e" stroke="#d6d2ca" stroke-width="1"/><path d="M4.500 4.300h15.500M4 7.500h17M4.500 10.800h16" stroke="#5fb0ee" stroke-width="1.700" stroke-dasharray="1.300 0.500 2 0.400 0.900 0.500"/></svg>
<div class="abs" style="left:977px;top:0px;width:15px;height:403px;background:#dcdcdc;"></div>
<div class="abs" style="left:977px;top:2.5px;width:15px;height:14.5px;background:#fff;border:1px solid #c9c9c9;box-sizing:border-box;"></div>
<svg style="left:981px;top:7px" width="7" height="4" viewBox="0 0 7 4" fill="none"><path d="M0 4h7L3.500 0z" fill="#777"/></svg>
<div class="abs" style="left:977px;top:277.5px;width:15px;height:36px;background:#fff;border:1px solid #c9c9c9;box-sizing:border-box;"></div>
<div class="abs" style="left:977px;top:388.5px;width:15px;height:14.5px;background:#fff;border:1px solid #c9c9c9;box-sizing:border-box;"></div>
<svg style="left:981px;top:394px" width="7" height="4" viewBox="0 0 7 4" fill="none"><path d="M0 0h7L3.500 4z" fill="#777"/></svg>
<svg style="left:981px;top:408px" width="7" height="9" viewBox="0 0 7 9" fill="none"><path d="M0 4h7L3.500 0zM0 8.500h7L3.500 4.500z" fill="#666"/></svg>
<svg style="left:981px;top:425px" width="7" height="9" viewBox="0 0 7 9" fill="none"><path d="M0 0.500h7L3.500 4.500zM0 5h7L3.500 9z" fill="#666"/></svg>
</div>

<!-- SLIDE -->
<div id="slide">
<div class="abs" style="left:86.0px;top:117.0px;width:60px;height:84px;background:radial-gradient(closest-side,rgba(90,200,255,0.42),rgba(90,200,255,0) 100%);"></div>
<div class="abs" style="left:612.0px;top:115.0px;width:76px;height:88px;background:radial-gradient(closest-side,rgba(90,200,255,0.42),rgba(90,200,255,0) 100%);"></div>
<div class="abs" style="left:80.0px;top:295.0px;width:76px;height:92px;background:radial-gradient(closest-side,rgba(90,200,255,0.42),rgba(90,200,255,0) 100%);"></div>
<div class="abs" style="left:608.0px;top:290.0px;width:80px;height:92px;background:radial-gradient(closest-side,rgba(90,200,255,0.42),rgba(90,200,255,0) 100%);"></div>
<div class="abs" style="left:358.0px;top:41.0px;width:190px;height:68px;background:radial-gradient(closest-side,rgba(90,200,255,0.25),rgba(90,200,255,0) 100%);"></div>
<div class="abs" style="left:172.0px;top:121.0px;width:150px;height:44px;background:radial-gradient(closest-side,rgba(90,200,255,0.22),rgba(90,200,255,0) 100%);"></div>
<div class="abs" style="left:423.0px;top:120.0px;width:210px;height:44px;background:radial-gradient(closest-side,rgba(90,200,255,0.22),rgba(90,200,255,0) 100%);"></div>
<div class="abs" style="left:164.0px;top:289.0px;width:176px;height:44px;background:radial-gradient(closest-side,rgba(90,200,255,0.22),rgba(90,200,255,0) 100%);"></div>
<div class="abs" style="left:433.0px;top:289.0px;width:176px;height:44px;background:radial-gradient(closest-side,rgba(90,200,255,0.22),rgba(90,200,255,0) 100%);"></div>
<svg style="left:0;top:0" width="780" height="439" viewBox="0 0 780 439" fill="none"><path d="M157 137.8H334" stroke="#0d4a68" stroke-width="1.300"/><path d="M157 142.8H334" stroke="#0d4a68" stroke-width="1.300"/><path d="M157 147.8H334" stroke="#0d4a68" stroke-width="1.300"/><path d="M191 151Q247.0 182.0 303 151" stroke="#0d4a68" stroke-width="1" fill="none"/><path d="M194.0 152.5C194.0 159.5 206.0 159.5 206.0 152.5" stroke="#0d4a68" stroke-width="0.900" fill="none"/><circle cx="194.0" cy="152.0" r="1.100" fill="#0d4a68"/><circle cx="206.0" cy="152.0" r="1.100" fill="#0d4a68"/><path d="M215.0 152.5C215.0 159.5 226.0 159.5 226.0 152.5" stroke="#0d4a68" stroke-width="0.900" fill="none"/><circle cx="215.0" cy="152.0" r="1.100" fill="#0d4a68"/><circle cx="226.0" cy="152.0" r="1.100" fill="#0d4a68"/><path d="M228.0 152.5C228.0 159.5 238.0 159.5 238.0 152.5" stroke="#0d4a68" stroke-width="0.900" fill="none"/><circle cx="228.0" cy="152.0" r="1.100" fill="#0d4a68"/><circle cx="238.0" cy="152.0" r="1.100" fill="#0d4a68"/><path d="M245.0 152.5C245.0 159.5 253.0 159.5 253.0 152.5" stroke="#0d4a68" stroke-width="0.900" fill="none"/><circle cx="245.0" cy="152.0" r="1.100" fill="#0d4a68"/><circle cx="253.0" cy="152.0" r="1.100" fill="#0d4a68"/><path d="M261.0 152.5C261.0 159.5 273.0 159.5 273.0 152.5" stroke="#0d4a68" stroke-width="0.900" fill="none"/><circle cx="261.0" cy="152.0" r="1.100" fill="#0d4a68"/><circle cx="273.0" cy="152.0" r="1.100" fill="#0d4a68"/><path d="M287.0 152.5C287.0 159.5 300.0 159.5 300.0 152.5" stroke="#0d4a68" stroke-width="0.900" fill="none"/><circle cx="287.0" cy="152.0" r="1.100" fill="#0d4a68"/><circle cx="300.0" cy="152.0" r="1.100" fill="#0d4a68"/><path d="M143 155q7 14 16 -2q3 -6 4 -14" stroke="#0d4a68" stroke-width="0.900"/><path d="M320 148q3 9 11 7q9 -3 2 -8q-5 -2 -9 1" stroke="#0d4a68" stroke-width="0.900"/><rect x="329" y="147" width="3" height="1.600" fill="#c98a7a"/><path d="M434 137.8H621.5" stroke="#0d4a68" stroke-width="1.300"/><path d="M434 143.2H621.5" stroke="#0d4a68" stroke-width="1.300"/><path d="M434 148.39999999999998H621.5" stroke="#0d4a68" stroke-width="1.300"/><path d="M449 152Q528.0 182 607 152" stroke="#0d4a68" stroke-width="1" fill="none"/><path d="M447.0 152.5C447.0 159.5 460.0 159.5 460.0 152.5" stroke="#0d4a68" stroke-width="0.900" fill="none"/><circle cx="447.0" cy="152.0" r="1.100" fill="#0d4a68"/><circle cx="460.0" cy="152.0" r="1.100" fill="#0d4a68"/><path d="M467.0 152.5C467.0 159.5 482.0 159.5 482.0 152.5" stroke="#0d4a68" stroke-width="0.900" fill="none"/><circle cx="467.0" cy="152.0" r="1.100" fill="#0d4a68"/><circle cx="482.0" cy="152.0" r="1.100" fill="#0d4a68"/><path d="M490.0 152.5C490.0 159.5 503.0 159.5 503.0 152.5" stroke="#0d4a68" stroke-width="0.900" fill="none"/><circle cx="490.0" cy="152.0" r="1.100" fill="#0d4a68"/><circle cx="503.0" cy="152.0" r="1.100" fill="#0d4a68"/><path d="M509.0 152.5C509.0 159.5 523.0 159.5 523.0 152.5" stroke="#0d4a68" stroke-width="0.900" fill="none"/><circle cx="509.0" cy="152.0" r="1.100" fill="#0d4a68"/><circle cx="523.0" cy="152.0" r="1.100" fill="#0d4a68"/><path d="M537.0 152.5C537.0 159.5 551.0 159.5 551.0 152.5" stroke="#0d4a68" stroke-width="0.900" fill="none"/><circle cx="537.0" cy="152.0" r="1.100" fill="#0d4a68"/><circle cx="551.0" cy="152.0" r="1.100" fill="#0d4a68"/><path d="M558.0 152.5C558.0 159.5 570.0 159.5 570.0 152.5" stroke="#0d4a68" stroke-width="0.900" fill="none"/><circle cx="558.0" cy="152.0" r="1.100" fill="#0d4a68"/><circle cx="570.0" cy="152.0" r="1.100" fill="#0d4a68"/><path d="M576.0 152.5C576.0 159.5 589.0 159.5 589.0 152.5" stroke="#0d4a68" stroke-width="0.900" fill="none"/><circle cx="576.0" cy="152.0" r="1.100" fill="#0d4a68"/><circle cx="589.0" cy="152.0" r="1.100" fill="#0d4a68"/><path d="M597.0 152.5C597.0 159.5 611.0 159.5 611.0 152.5" stroke="#0d4a68" stroke-width="0.900" fill="none"/><circle cx="597.0" cy="152.0" r="1.100" fill="#0d4a68"/><circle cx="611.0" cy="152.0" r="1.100" fill="#0d4a68"/><path d="M417 156q7 14 16 -2q3 -6 4 -14" stroke="#0d4a68" stroke-width="0.900"/><path d="M163 306.7H343" stroke="#0d4a68" stroke-width="1.300"/><path d="M163 312.1H343" stroke="#0d4a68" stroke-width="1.300"/><path d="M163 317.1H343" stroke="#0d4a68" stroke-width="1.300"/><path d="M183 319Q250.0 353.4 317 319" stroke="#0d4a68" stroke-width="1" fill="none"/><path d="M186.0 321C186.0 328.0 205.0 328.0 205.0 321" stroke="#0d4a68" stroke-width="0.900" fill="none"/><circle cx="186.0" cy="320.5" r="1.100" fill="#0d4a68"/><circle cx="205.0" cy="320.5" r="1.100" fill="#0d4a68"/><path d="M211.0 321C211.0 328.0 221.0 328.0 221.0 321" stroke="#0d4a68" stroke-width="0.900" fill="none"/><circle cx="211.0" cy="320.5" r="1.100" fill="#0d4a68"/><circle cx="221.0" cy="320.5" r="1.100" fill="#0d4a68"/><path d="M227.0 321C227.0 328.0 239.0 328.0 239.0 321" stroke="#0d4a68" stroke-width="0.900" fill="none"/><circle cx="227.0" cy="320.5" r="1.100" fill="#0d4a68"/><circle cx="239.0" cy="320.5" r="1.100" fill="#0d4a68"/><path d="M246.0 321C246.0 328.0 258.0 328.0 258.0 321" stroke="#0d4a68" stroke-width="0.900" fill="none"/><circle cx="246.0" cy="320.5" r="1.100" fill="#0d4a68"/><circle cx="258.0" cy="320.5" r="1.100" fill="#0d4a68"/><path d="M265.0 321C265.0 328.0 281.0 328.0 281.0 321" stroke="#0d4a68" stroke-width="0.900" fill="none"/><circle cx="265.0" cy="320.5" r="1.100" fill="#0d4a68"/><circle cx="281.0" cy="320.5" r="1.100" fill="#0d4a68"/><path d="M286.0 321C286.0 328.0 300.0 328.0 300.0 321" stroke="#0d4a68" stroke-width="0.900" fill="none"/><circle cx="286.0" cy="320.5" r="1.100" fill="#0d4a68"/><circle cx="300.0" cy="320.5" r="1.100" fill="#0d4a68"/><path d="M307.0 321C307.0 328.0 318.0 328.0 318.0 321" stroke="#0d4a68" stroke-width="0.900" fill="none"/><circle cx="307.0" cy="320.5" r="1.100" fill="#0d4a68"/><circle cx="318.0" cy="320.5" r="1.100" fill="#0d4a68"/><path d="M143 324q7 14 16 -2q3 -6 4 -14" stroke="#0d4a68" stroke-width="0.900"/><path d="M329 317.5q3 9 11 7q9 -3 2 -8q-5 -2 -9 1" stroke="#0d4a68" stroke-width="0.900"/><rect x="338" y="316.5" width="3" height="1.600" fill="#c98a7a"/><path d="M404 306.3H626" stroke="#0d4a68" stroke-width="1.300"/><path d="M404 311.8H626" stroke="#0d4a68" stroke-width="1.300"/><path d="M404 317.3H626" stroke="#0d4a68" stroke-width="1.300"/><path d="M453 319Q521.0 354.0 589 319" stroke="#0d4a68" stroke-width="1" fill="none"/><path d="M454.0 321.5C454.0 328.5 474.0 328.5 474.0 321.5" stroke="#0d4a68" stroke-width="0.900" fill="none"/><circle cx="454.0" cy="321.0" r="1.100" fill="#0d4a68"/><circle cx="474.0" cy="321.0" r="1.100" fill="#0d4a68"/><path d="M480.0 321.5C480.0 328.5 491.0 328.5 491.0 321.5" stroke="#0d4a68" stroke-width="0.900" fill="none"/><circle cx="480.0" cy="321.0" r="1.100" fill="#0d4a68"/><circle cx="491.0" cy="321.0" r="1.100" fill="#0d4a68"/><path d="M497.0 321.5C497.0 328.5 509.0 328.5 509.0 321.5" stroke="#0d4a68" stroke-width="0.900" fill="none"/><circle cx="497.0" cy="321.0" r="1.100" fill="#0d4a68"/><circle cx="509.0" cy="321.0" r="1.100" fill="#0d4a68"/><path d="M516.0 321.5C516.0 328.5 529.0 328.5 529.0 321.5" stroke="#0d4a68" stroke-width="0.900" fill="none"/><circle cx="516.0" cy="321.0" r="1.100" fill="#0d4a68"/><circle cx="529.0" cy="321.0" r="1.100" fill="#0d4a68"/><path d="M536.0 321.5C536.0 328.5 553.0 328.5 553.0 321.5" stroke="#0d4a68" stroke-width="0.900" fill="none"/><circle cx="536.0" cy="321.0" r="1.100" fill="#0d4a68"/><circle cx="553.0" cy="321.0" r="1.100" fill="#0d4a68"/><path d="M557.0 321.5C557.0 328.5 572.0 328.5 572.0 321.5" stroke="#0d4a68" stroke-width="0.900" fill="none"/><circle cx="557.0" cy="321.0" r="1.100" fill="#0d4a68"/><circle cx="572.0" cy="321.0" r="1.100" fill="#0d4a68"/><path d="M579.0 321.5C579.0 328.5 590.0 328.5 590.0 321.5" stroke="#0d4a68" stroke-width="0.900" fill="none"/><circle cx="579.0" cy="321.0" r="1.100" fill="#0d4a68"/><circle cx="590.0" cy="321.0" r="1.100" fill="#0d4a68"/><path d="M392 324q7 14 16 -2q3 -6 4 -14" stroke="#0d4a68" stroke-width="0.900"/><path d="M609 317.5q3 9 11 7q9 -3 2 -8q-5 -2 -9 1" stroke="#0d4a68" stroke-width="0.900"/><rect x="618" y="316.5" width="3" height="1.600" fill="#c98a7a"/><path d="M523.5 233c1 10 6 16 13 17M550.7 233c-1 10 -5 16 -11 17M533.5 263c1 8 9 9 10.500 -5" transform="translate(-143,-171)" stroke="#0d4a68" stroke-width="1.2"/><rect x="383.0" y="52.8" width="4" height="3.5" rx="1.5" fill="#104b69" opacity="0.800"/><rect x="401.0" y="52.8" width="4" height="3.5" rx="1.5" fill="#104b69" opacity="0.800"/><rect x="383.8" y="63.2" width="4.5" height="5" rx="1.5" fill="#104b69" opacity="0.800"/><rect x="400.8" y="63.2" width="4.5" height="5" rx="1.5" fill="#104b69" opacity="0.800"/><rect x="388.2" y="84.5" width="4.5" height="4" rx="1.5" fill="#104b69" opacity="0.800"/><rect x="399.1" y="84.0" width="4.5" height="4" rx="1.5" fill="#104b69" opacity="0.800"/><path d="M580.1 233c1 10 6 16 13 17M607.3000000000001 233c-1 10 -5 16 -11 17M590.1 263c1 8 9 9 10.500 -5" transform="translate(-143,-171)" stroke="#0d4a68" stroke-width="1.2"/><rect x="439.6" y="52.8" width="4" height="3.5" rx="1.5" fill="#104b69" opacity="0.800"/><rect x="457.6" y="52.8" width="4" height="3.5" rx="1.5" fill="#104b69" opacity="0.800"/><rect x="440.4" y="63.2" width="4.5" height="5" rx="1.5" fill="#104b69" opacity="0.800"/><rect x="457.4" y="63.2" width="4.5" height="5" rx="1.5" fill="#104b69" opacity="0.800"/><rect x="444.9" y="84.5" width="4.5" height="4" rx="1.5" fill="#104b69" opacity="0.800"/><rect x="455.8" y="84.0" width="4.5" height="4" rx="1.5" fill="#104b69" opacity="0.800"/><path d="M572.500 238v19M563.500 263c1 8 8 8 9.500 -5" transform="translate(-143,-171)" stroke="#0d4a68" stroke-width="1.2"/><rect x="418.4" y="64.6" width="4" height="4" rx="1.5" fill="#104b69" opacity="0.800"/><rect x="427.1" y="64.3" width="4.5" height="4.5" rx="1.5" fill="#104b69" opacity="0.800"/><rect x="418.4" y="84.0" width="4" height="4" rx="1.5" fill="#104b69" opacity="0.800"/><rect x="427.8" y="83.8" width="4.5" height="4.5" rx="1.5" fill="#104b69" opacity="0.800"/><rect x="420.2" y="53.2" width="3.5" height="3.5" rx="1.5" fill="#104b69" opacity="0.800"/><path d="M620 263c4 8 14 8 19.500 -2M651 263.500c4 7 14 7 20 0M655 247c3 4 7 5 9 4" transform="translate(-143,-171)" stroke="#0d4a68" stroke-width="1.2"/><rect x="469.9" y="64.6" width="4" height="4" rx="1.5" fill="#104b69" opacity="0.800"/><rect x="480.2" y="64.7" width="5.5" height="5" rx="2.5" fill="#104b69" opacity="0.800"/><rect x="469.9" y="84.0" width="4" height="4" rx="1.5" fill="#104b69" opacity="0.800"/><rect x="495.0" y="85.1" width="4.5" height="4.5" rx="2.2" fill="#104b69" opacity="0.800"/><rect x="514.8" y="65.2" width="4.5" height="4.5" rx="2.2" fill="#104b69" opacity="0.800"/><rect x="509.7" y="83.6" width="4" height="4" rx="1.5" fill="#104b69" opacity="0.800"/><rect x="525.8" y="89.1" width="4.5" height="4.5" rx="2.2" fill="#104b69" opacity="0.800"/><path d="M664 229.500c6 1 7 8 3 13" transform="translate(-143,-171)" stroke="#134e6e" stroke-width="3.500" stroke-linecap="round" opacity="0.850"/><path d="M246 316c1 9 5 13 9 12.500M269 318v23c0 14 -3 21 -7 21c-4 0 -6 -4 -6 -9" transform="translate(-143,-171)" stroke="#0d4a68" stroke-width="1.2"/><rect x="101.0" y="142.5" width="4" height="4" rx="2" fill="#104b69" opacity="0.800"/><rect x="111.0" y="180.0" width="5" height="4" rx="2" fill="#104b69" opacity="0.800"/><rect x="110.0" y="144.5" width="5" height="3" rx="1.5" fill="#104b69" opacity="0.800"/><rect x="120.0" y="144.2" width="8" height="3.5" rx="1.5" fill="#104b69" opacity="0.800"/><rect x="110.0" y="169.5" width="5" height="3" rx="1.5" fill="#104b69" opacity="0.800"/><rect x="120.0" y="169.2" width="8" height="3.5" rx="1.5" fill="#104b69" opacity="0.800"/><path d="M777.500 314c1 9 7 13 10 10c3 -3 4 -6 4 -8M790.500 353.500c2 9 14 10 18.500 0" transform="translate(-143,-171)" stroke="#0d4a68" stroke-width="1.2"/><rect x="646.6" y="130.5" width="3.5" height="4" rx="1.5" fill="#104b69" opacity="0.800"/><rect x="646.6" y="142.2" width="3.5" height="5" rx="1.5" fill="#104b69" opacity="0.800"/><rect x="632.2" y="140.4" width="4.5" height="4.5" rx="2.2" fill="#104b69" opacity="0.800"/><rect x="649.9" y="156.0" width="3.5" height="4" rx="1.5" fill="#104b69" opacity="0.800"/><rect x="658.7" y="165.4" width="4" height="4.5" rx="1.5" fill="#104b69" opacity="0.800"/><rect x="652.0" y="182.5" width="3.5" height="4" rx="1.5" fill="#104b69" opacity="0.800"/><rect x="665.0" y="178.0" width="4" height="4" rx="2" fill="#104b69" opacity="0.800"/><ellipse cx="638" cy="173.5" rx="5.500" ry="3.500" fill="#104b69" opacity="0.750"/><path d="M247.500 496.500c-1 8 1 22 6 21.500c3 0 4 -3 4 -6M244 534c1 8 8 11 14 8c3 -1.500 5 -3.500 5.500 -5" transform="translate(-143,-171)" stroke="#0d4a68" stroke-width="1.2"/><rect x="113.5" y="313.8" width="4" height="4" rx="1.5" fill="#104b69" opacity="0.800"/><rect x="114.2" y="325.5" width="4" height="6" rx="1.5" fill="#104b69" opacity="0.800"/><rect x="102.2" y="322.4" width="4.5" height="4.5" rx="2.2" fill="#104b69" opacity="0.800"/><rect x="135.2" y="351.2" width="3.5" height="4" rx="1.5" fill="#104b69" opacity="0.800"/><rect x="119.6" y="352.0" width="4.5" height="4" rx="1.5" fill="#104b69" opacity="0.800"/><ellipse cx="102" cy="360.5" rx="4" ry="3.200" fill="#104b69"/><path d="M256 507c3 -3 7 -4 10 -3" transform="translate(-143,-171)" stroke="#104b69" stroke-width="2.500" stroke-linecap="round"/><path d="M766 489.500c3 1 8 1 11 2M776.500 518c2 8 8 12 14 13c3 0 5 1 6 2M810.500 516c3 6 1 18 -6 21c-4 1 -7 -2 -8 -5" transform="translate(-143,-171)" stroke="#0d4a68" stroke-width="1.2"/><path d="M777.500 492l5 5.500" transform="translate(-143,-171)" stroke="#104b69" stroke-width="3" stroke-linecap="round"/><rect x="644.0" y="328.0" width="4" height="4" rx="1.5" fill="#104b69" opacity="0.800"/><rect x="642.7" y="335.0" width="4" height="5" rx="1.5" fill="#104b69" opacity="0.800"/><rect x="642.2" y="346.0" width="3.5" height="8" rx="1.5" fill="#104b69" opacity="0.800"/><rect x="665.4" y="341.8" width="4.5" height="4.5" rx="2.2" fill="#104b69" opacity="0.800"/><rect x="650.5" y="357.5" width="5" height="5" rx="2.5" fill="#104b69" opacity="0.800"/></svg>
<span class="t" style="left:241.65px;top:52.84px;font-size:46.5px;transform:scaleX(0.9509);color:#fff;font-weight:bold;">YOUR</span>
<span class="t" style="left:378.33px;top:52.19px;font-size:48px;transform:scaleX(1.1600);color:#fff;font-family:'DejaVu Sans Light','DejaVu Sans',sans-serif;font-weight:200;letter-spacing:0.637px;-webkit-text-stroke:0.900px #fff;text-shadow:0 0 1px #3d9dff,0 0 1px #3d9dff,0 0 1.500px #3d9dff,0 0 2px #5cc6ff,0 0 2px #5cc6ff,0 0 4px #3cb0ff,0 0 4px #3cb0ff,0 0 4px #3cb0ff,0 0 8px rgba(60,180,255,0.800),0 0 8px rgba(60,180,255,0.800),0 0 14px rgba(70,195,255,0.500);">TITLE</span>
<svg style="left:137px;top:126.80000000000001px" width="30" height="29" viewBox="0 0 30 29" fill="none"><defs><filter id="sg295" x="-50%" y="-50%" width="200%" height="200%"><feGaussianBlur stdDeviation="1.700"/></filter>
<filter id="sm295" x="-50%" y="-50%" width="200%" height="200%"><feGaussianBlur stdDeviation="1.200"/></filter></defs>
<path d="M15 0.500L19.200 9.600L29.700 11.300L22.700 17.900L24.400 28.400L15 24.900L5.600 28.400L7 18.300L0.300 11.300L10.900 9.600Z" stroke="#8fd8ff" stroke-width="3.600" filter="url(#sg295)" opacity="0.950"/>
<path d="M7.500 14L6 26.500L15 23.500L23.500 26.500L22 15Z" fill="#d238c8" filter="url(#sm295)" opacity="0.900"/>
<path d="M8 13.500L11 10.500L14.700 5.500L18.500 10.500L22 13.500Z" fill="#7b46d8" filter="url(#sm295)" opacity="0.700"/>
<path d="M6.300 13.800c1.500-1.800 2.500 0.800 4.600-2L14.700 6.300l3.800 5.500l5 0.800" stroke="#ff7d33" stroke-width="2" stroke-linejoin="round" stroke-linecap="round"/>
<path d="M6.300 13.800c1.500-1.800 2.500 0.800 4.600-2L14.700 6.300l3.800 5.500l5 0.800" stroke="#ffe9c9" stroke-width="0.800" stroke-linejoin="round" stroke-linecap="round"/>
<path d="M9.500 20.900v2.900M12.900 19.600v3.800M16.800 18.500v4.500M20.600 17.200v7" stroke="#ff7a3c" stroke-width="1.900" stroke-linecap="round"/>
<path d="M9.500 20.900v2.900M12.900 19.600v3.800M16.800 18.500v4.500M20.600 17.200v7" stroke="#fff1de" stroke-width="0.800" stroke-linecap="round"/>
<path d="M6.600 18.600C12 15.500 20 14.300 27 14.200" stroke="#f2f7ff" stroke-width="2.300" stroke-linecap="round"/>
<path d="M15 0.500L19.200 9.600L29.700 11.300L22.700 17.900L24.400 28.400L15 24.900L5.600 28.400L7 18.300L0.300 11.300L10.900 9.600Z" stroke="#f6fcff" stroke-width="1.500" stroke-linejoin="round"/></svg>
<svg style="left:411px;top:127.0px" width="30" height="29" viewBox="0 0 30 29" fill="none"><defs><filter id="sg569" x="-50%" y="-50%" width="200%" height="200%"><feGaussianBlur stdDeviation="1.700"/></filter>
<filter id="sm569" x="-50%" y="-50%" width="200%" height="200%"><feGaussianBlur stdDeviation="1.200"/></filter></defs>
<path d="M15 0.500L19.200 9.600L29.700 11.300L22.700 17.900L24.400 28.400L15 24.900L5.600 28.400L7 18.300L0.300 11.300L10.900 9.600Z" stroke="#8fd8ff" stroke-width="3.600" filter="url(#sg569)" opacity="0.950"/>
<path d="M7.500 14L6 26.500L15 23.500L23.500 26.500L22 15Z" fill="#d238c8" filter="url(#sm569)" opacity="0.900"/>
<path d="M8 13.500L11 10.500L14.700 5.500L18.500 10.500L22 13.500Z" fill="#7b46d8" filter="url(#sm569)" opacity="0.700"/>
<path d="M6.300 13.800c1.500-1.800 2.500 0.800 4.600-2L14.700 6.300l3.800 5.500l5 0.800" stroke="#ff7d33" stroke-width="2" stroke-linejoin="round" stroke-linecap="round"/>
<path d="M6.300 13.800c1.500-1.800 2.500 0.800 4.600-2L14.700 6.300l3.800 5.500l5 0.800" stroke="#ffe9c9" stroke-width="0.800" stroke-linejoin="round" stroke-linecap="round"/>
<path d="M9.500 20.900v2.900M12.900 19.600v3.800M16.800 18.500v4.500M20.600 17.200v7" stroke="#ff7a3c" stroke-width="1.900" stroke-linecap="round"/>
<path d="M9.500 20.900v2.900M12.900 19.600v3.800M16.800 18.500v4.500M20.600 17.200v7" stroke="#fff1de" stroke-width="0.800" stroke-linecap="round"/>
<path d="M6.600 18.600C12 15.500 20 14.300 27 14.200" stroke="#f2f7ff" stroke-width="2.300" stroke-linecap="round"/>
<path d="M15 0.500L19.200 9.600L29.700 11.300L22.700 17.900L24.400 28.400L15 24.900L5.600 28.400L7 18.300L0.300 11.300L10.900 9.600Z" stroke="#f6fcff" stroke-width="1.500" stroke-linejoin="round"/></svg>
<svg style="left:136.39999999999998px;top:295.7px" width="30" height="29" viewBox="0 0 30 29" fill="none"><defs><filter id="sg294" x="-50%" y="-50%" width="200%" height="200%"><feGaussianBlur stdDeviation="1.700"/></filter>
<filter id="sm294" x="-50%" y="-50%" width="200%" height="200%"><feGaussianBlur stdDeviation="1.200"/></filter></defs>
<path d="M15 0.500L19.200 9.600L29.700 11.300L22.700 17.900L24.400 28.400L15 24.900L5.600 28.400L7 18.300L0.300 11.300L10.900 9.600Z" stroke="#8fd8ff" stroke-width="3.600" filter="url(#sg294)" opacity="0.950"/>
<path d="M7.500 14L6 26.500L15 23.500L23.500 26.500L22 15Z" fill="#d238c8" filter="url(#sm294)" opacity="0.900"/>
<path d="M8 13.500L11 10.500L14.700 5.500L18.500 10.500L22 13.500Z" fill="#7b46d8" filter="url(#sm294)" opacity="0.700"/>
<path d="M6.300 13.800c1.500-1.800 2.500 0.800 4.600-2L14.700 6.300l3.800 5.500l5 0.800" stroke="#ff7d33" stroke-width="2" stroke-linejoin="round" stroke-linecap="round"/>
<path d="M6.300 13.800c1.500-1.800 2.500 0.800 4.600-2L14.700 6.300l3.800 5.500l5 0.800" stroke="#ffe9c9" stroke-width="0.800" stroke-linejoin="round" stroke-linecap="round"/>
<path d="M9.500 20.900v2.900M12.900 19.600v3.800M16.800 18.500v4.500M20.600 17.200v7" stroke="#ff7a3c" stroke-width="1.900" stroke-linecap="round"/>
<path d="M9.500 20.900v2.900M12.900 19.600v3.800M16.800 18.500v4.500M20.600 17.200v7" stroke="#fff1de" stroke-width="0.800" stroke-linecap="round"/>
<path d="M6.600 18.600C12 15.500 20 14.300 27 14.200" stroke="#f2f7ff" stroke-width="2.300" stroke-linecap="round"/>
<path d="M15 0.500L19.200 9.600L29.700 11.300L22.700 17.900L24.400 28.400L15 24.900L5.600 28.400L7 18.300L0.300 11.300L10.900 9.600Z" stroke="#f6fcff" stroke-width="1.500" stroke-linejoin="round"/></svg>
<svg style="left:385.79999999999995px;top:296.1px" width="30" height="29" viewBox="0 0 30 29" fill="none"><defs><filter id="sg543" x="-50%" y="-50%" width="200%" height="200%"><feGaussianBlur stdDeviation="1.700"/></filter>
<filter id="sm543" x="-50%" y="-50%" width="200%" height="200%"><feGaussianBlur stdDeviation="1.200"/></filter></defs>
<path d="M15 0.500L19.200 9.600L29.700 11.300L22.700 17.900L24.400 28.400L15 24.900L5.600 28.400L7 18.300L0.300 11.300L10.900 9.600Z" stroke="#8fd8ff" stroke-width="3.600" filter="url(#sg543)" opacity="0.950"/>
<path d="M7.500 14L6 26.500L15 23.500L23.500 26.500L22 15Z" fill="#d238c8" filter="url(#sm543)" opacity="0.900"/>
<path d="M8 13.500L11 10.500L14.700 5.500L18.500 10.500L22 13.500Z" fill="#7b46d8" filter="url(#sm543)" opacity="0.700"/>
<path d="M6.300 13.800c1.500-1.800 2.500 0.800 4.600-2L14.700 6.300l3.800 5.500l5 0.800" stroke="#ff7d33" stroke-width="2" stroke-linejoin="round" stroke-linecap="round"/>
<path d="M6.300 13.800c1.500-1.800 2.500 0.800 4.600-2L14.700 6.300l3.800 5.500l5 0.800" stroke="#ffe9c9" stroke-width="0.800" stroke-linejoin="round" stroke-linecap="round"/>
<path d="M9.500 20.900v2.900M12.900 19.600v3.800M16.800 18.500v4.500M20.600 17.200v7" stroke="#ff7a3c" stroke-width="1.900" stroke-linecap="round"/>
<path d="M9.500 20.900v2.900M12.900 19.600v3.800M16.800 18.500v4.500M20.600 17.200v7" stroke="#fff1de" stroke-width="0.800" stroke-linecap="round"/>
<path d="M6.600 18.600C12 15.500 20 14.300 27 14.200" stroke="#f2f7ff" stroke-width="2.300" stroke-linecap="round"/>
<path d="M15 0.500L19.200 9.600L29.700 11.300L22.700 17.900L24.400 28.400L15 24.900L5.600 28.400L7 18.300L0.300 11.300L10.900 9.600Z" stroke="#f6fcff" stroke-width="1.500" stroke-linejoin="round"/></svg>
<span class="t" style="left:190.55px;top:130.88px;font-size:26.5px;transform:scaleX(1.2200);color:#fff;font-family:'DejaVu Sans Light','DejaVu Sans',sans-serif;font-weight:200;letter-spacing:3.302px;paint-order:stroke fill;-webkit-text-stroke:2px #7fd4ff;text-shadow:0 0 2px #5cc6ff,0 0 2px #5cc6ff,0 0 4px #3cb0ff,0 0 4px #3cb0ff,0 0 4px #3cb0ff,0 0 8px rgba(60,180,255,0.800),0 0 8px rgba(60,180,255,0.800),0 0 14px rgba(70,195,255,0.500);">SMILE</span>
<span class="t" style="left:445.15px;top:129.14px;font-size:28.8px;transform:scaleX(1.0200);color:#fff;font-family:'DejaVu Sans Light','DejaVu Sans',sans-serif;font-weight:200;letter-spacing:0.297px;paint-order:stroke fill;-webkit-text-stroke:2px #7fd4ff;text-shadow:0 0 2px #5cc6ff,0 0 2px #5cc6ff,0 0 4px #3cb0ff,0 0 4px #3cb0ff,0 0 4px #3cb0ff,0 0 8px rgba(60,180,255,0.800),0 0 8px rgba(60,180,255,0.800),0 0 14px rgba(70,195,255,0.500);">YOUR TEXT</span>
<span class="t" style="left:180.43px;top:298.90px;font-size:27.3px;transform:scaleX(1.0000);color:#fff;font-family:'DejaVu Sans Light','DejaVu Sans',sans-serif;font-weight:200;letter-spacing:1.388px;paint-order:stroke fill;-webkit-text-stroke:2px #7fd4ff;text-shadow:0 0 2px #5cc6ff,0 0 2px #5cc6ff,0 0 4px #3cb0ff,0 0 4px #3cb0ff,0 0 4px #3cb0ff,0 0 8px rgba(60,180,255,0.800),0 0 8px rgba(60,180,255,0.800),0 0 14px rgba(70,195,255,0.500);">MESSAGE</span>
<span class="t" style="left:447.61px;top:298.11px;font-size:29.3px;transform:scaleX(1.0000);color:#fff;font-family:'DejaVu Sans Light','DejaVu Sans',sans-serif;font-weight:200;letter-spacing:0.286px;paint-order:stroke fill;-webkit-text-stroke:2px #7fd4ff;text-shadow:0 0 2px #5cc6ff,0 0 2px #5cc6ff,0 0 4px #3cb0ff,0 0 4px #3cb0ff,0 0 4px #3cb0ff,0 0 8px rgba(60,180,255,0.800),0 0 8px rgba(60,180,255,0.800),0 0 14px rgba(70,195,255,0.500);">MESSAGE</span>
<span class="t" style="left:100.40px;top:128.60px;font-size:70px;transform:scaleX(0.8);filter:drop-shadow(0 0 1.500px #2f7dff) drop-shadow(0 0 3px #2f86ff) drop-shadow(0 0 6px rgba(60,160,255,0.900)) drop-shadow(0 0 10px rgba(90,200,255,0.500));"><span style="display:inline-block;color:#fff;-webkit-text-stroke:2px #4a98ff;clip-path:inset(-30% -150% 25.800% -150%);">1</span></span>
<span class="t" style="left:629.88px;top:125.86px;font-size:67.5px;transform:scaleX(1.0721);color:#fff;-webkit-text-stroke:2px #4a98ff;text-shadow:0 0 2px #2f7dff,0 0 2px #2f7dff,0 0 2px #2f7dff,0 0 4px #2f86ff,0 0 4px #2f86ff,0 0 4px #2f86ff,0 0 9px rgba(60,160,255,0.900),0 0 9px rgba(60,160,255,0.900),0 0 9px rgba(60,160,255,0.900),0 0 16px rgba(90,200,255,0.600),0 0 16px rgba(90,200,255,0.600);">2</span>
<span class="t" style="left:101.10px;top:308.51px;font-size:68.5px;transform:scaleX(0.9220);color:#fff;-webkit-text-stroke:2px #4a98ff;text-shadow:0 0 2px #2f7dff,0 0 2px #2f7dff,0 0 2px #2f7dff,0 0 4px #2f86ff,0 0 4px #2f86ff,0 0 4px #2f86ff,0 0 9px rgba(60,160,255,0.900),0 0 9px rgba(60,160,255,0.900),0 0 9px rgba(60,160,255,0.900),0 0 16px rgba(90,200,255,0.600),0 0 16px rgba(90,200,255,0.600);">3</span>
<span class="t" style="left:628.98px;top:300.50px;font-size:71px;transform:scaleX(0.9762);color:#fff;-webkit-text-stroke:2px #4a98ff;text-shadow:0 0 2px #2f7dff,0 0 2px #2f7dff,0 0 2px #2f7dff,0 0 4px #2f86ff,0 0 4px #2f86ff,0 0 4px #2f86ff,0 0 9px rgba(60,160,255,0.900),0 0 9px rgba(60,160,255,0.900),0 0 9px rgba(60,160,255,0.900),0 0 16px rgba(90,200,255,0.600),0 0 16px rgba(90,200,255,0.600);">4</span>
<span class="t" style="left:178.04px;top:179.80px;font-size:11.7px;transform:scaleX(0.9803);color:#3f3b3b;font-weight:bold;white-space:pre;">LORUM IPSUM.  HERE IS A</span>
<span class="t" style="left:179.01px;top:193.10px;font-size:11.7px;transform:scaleX(1.0201);color:#3f3b3b;font-weight:bold;white-space:pre;">GOOD PLACE FOR YOUR</span>
<span class="t" style="left:172.97px;top:206.40px;font-size:11.7px;transform:scaleX(0.9476);color:#3f3b3b;font-weight:bold;white-space:pre;">EXTRA OR ALTERNATE TEXT.</span>
<span class="t" style="left:191.68px;top:219.70px;font-size:11.7px;transform:scaleX(0.9367);color:#3f3b3b;font-weight:bold;white-space:pre;">EXAMPLE TEXT HERE.</span>
<span class="t" style="left:445.94px;top:179.40px;font-size:11.7px;transform:scaleX(0.9783);color:#3f3b3b;font-weight:bold;white-space:pre;">LORUM IPSUM.  HERE IS A</span>
<span class="t" style="left:447.21px;top:192.70px;font-size:11.7px;transform:scaleX(1.0159);color:#3f3b3b;font-weight:bold;white-space:pre;">GOOD PLACE FOR YOUR</span>
<span class="t" style="left:440.67px;top:206.00px;font-size:11.7px;transform:scaleX(0.9500);color:#3f3b3b;font-weight:bold;white-space:pre;">EXTRA OR ALTERNATE TEXT.</span>
<span class="t" style="left:460.08px;top:219.30px;font-size:11.7px;transform:scaleX(0.9320);color:#3f3b3b;font-weight:bold;white-space:pre;">EXAMPLE TEXT HERE.</span>
<span class="t" style="left:176.64px;top:348.90px;font-size:11.7px;transform:scaleX(0.9857);color:#3f3b3b;font-weight:bold;white-space:pre;">LORUM IPSUM.  HERE IS A</span>
<span class="t" style="left:178.51px;top:362.20px;font-size:11.7px;transform:scaleX(1.0180);color:#3f3b3b;font-weight:bold;white-space:pre;">GOOD PLACE FOR YOUR</span>
<span class="t" style="left:172.17px;top:375.50px;font-size:11.7px;transform:scaleX(0.9476);color:#3f3b3b;font-weight:bold;white-space:pre;">EXTRA OR ALTERNATE TEXT.</span>
<span class="t" style="left:191.18px;top:388.80px;font-size:11.7px;transform:scaleX(0.9344);color:#3f3b3b;font-weight:bold;white-space:pre;">EXAMPLE TEXT HERE.</span>
<span class="t" style="left:445.85px;top:348.90px;font-size:11.7px;transform:scaleX(0.9750);color:#3f3b3b;font-weight:bold;white-space:pre;">LORUM IPSUM.  HERE IS A</span>
<span class="t" style="left:447.22px;top:362.20px;font-size:11.7px;transform:scaleX(1.0110);color:#3f3b3b;font-weight:bold;white-space:pre;">GOOD PLACE FOR YOUR</span>
<span class="t" style="left:440.87px;top:375.50px;font-size:11.7px;transform:scaleX(0.9470);color:#3f3b3b;font-weight:bold;white-space:pre;">EXTRA OR ALTERNATE TEXT.</span>
<span class="t" style="left:460.08px;top:388.80px;font-size:11.7px;transform:scaleX(0.9297);color:#3f3b3b;font-weight:bold;white-space:pre;">EXAMPLE TEXT HERE.</span>
</div>

<!-- STATUS BAR -->
<div id="status">
<div class="abs" style="left:0px;top:0px;width:993px;height:1px;background:#c6c4c2;"></div>
<span class="t" style="left:7.79px;top:6.24px;font-size:12px;transform:scaleX(0.9526);">Slide 8 of 10</span>
<svg style="left:90px;top:5px" width="14" height="13" viewBox="0 0 14 13" fill="none"><path d="M4.900 11H0.500V0.600h4.500c1 0 1.600 0.500 1.600 1.500V7.800M6.600 2.100c0-1 0.600-1.500 1.600-1.500h4.300v5.300" stroke="#444" stroke-width="1"/><path d="M5.300 9.300l3.200 3.200l5.200-5.400" stroke="#444" stroke-width="1.100"/></svg>
<span class="t" style="left:120.36px;top:6.24px;font-size:12px;transform:scaleX(0.9538);">English (United States)</span>
<svg style="left:253px;top:3px" width="15" height="15" viewBox="0 0 15 15" fill="none"><path d="M6 2.500a5 5 0 1 0 4.500 7" stroke="#444" stroke-width="1" stroke-dasharray="2.200 1.300"/><path d="M6.500 0.500v5.500M4 3.800l2.500 2.500l2.500-2.500" stroke="#444" stroke-width="1"/><path d="M9 9l5 5M14 9l-5 5" stroke="#444" stroke-width="1.100"/></svg>
<span class="t" style="left:271.98px;top:6.24px;font-size:12px;transform:scaleX(0.9459);">Accessibility: Investigate</span>
<svg style="left:556px;top:3px" width="17" height="17" viewBox="0 0 17 17" fill="none"><path d="M5 4l3.500-3l3.500 3" stroke="#444" stroke-width="1"/><path d="M0.500 8.300h16M0.500 12h16M0.500 15.700h16" stroke="#444" stroke-width="1"/></svg>
<span class="t" style="left:575.06px;top:6.64px;font-size:12px;transform:scaleX(0.9590);">Notes</span>
<div class="abs" style="left:624px;top:0.5px;width:39.5px;height:21.5px;background:#c8c6c4;"></div>
<svg style="left:637px;top:5px" width="15" height="12" viewBox="0 0 15 12" fill="none"><rect x="0.500" y="0.500" width="14" height="11" stroke="#444" stroke-width="1"/><path d="M3.500 0.500v11M3.500 8.500h11" stroke="#444" stroke-width="1"/><rect x="5.500" y="2.500" width="7" height="4" stroke="#444" stroke-width="0.900"/></svg>
<svg style="left:677px;top:5px" width="15" height="12" viewBox="0 0 15 12" fill="none"><rect x="0.500" y="0.500" width="5" height="4" stroke="#444"/><rect x="8.500" y="0.500" width="5" height="4" stroke="#444"/><rect x="0.500" y="7.500" width="5" height="4" stroke="#444"/><rect x="8.500" y="7.500" width="5" height="4" stroke="#444"/></svg>
<svg style="left:717px;top:5px" width="14" height="12" viewBox="0 0 14 12" fill="none"><path d="M7 1.500C5 0.300 2.500 0.300 0.500 1v10c2-0.700 4.500-0.700 6.500 0.500c2-1.200 4.500-1.200 6.500-0.500V1C11.500 0.300 9 0.300 7 1.500zM7 1.500v10" stroke="#444" stroke-width="1"/><path d="M2 3.500h3.500M2 5.500h3.500M2 7.500h3.500M8.500 3.500h3.500M8.500 5.500h3.500M8.500 7.500h3.500" stroke="#444" stroke-width="0.700"/></svg>
<svg style="left:757px;top:4px" width="14" height="14" viewBox="0 0 14 14" fill="none"><path d="M0 1h14M1.500 1v7.500h11V1M7 8.500v4.500M3.500 13.300h7" stroke="#444" stroke-width="1"/></svg>
<div class="abs" style="left:790px;top:10px;width:8px;height:1px;background:#444;"></div>
<div class="abs" style="left:803px;top:11px;width:100px;height:1px;background:#a6a4a2;"></div>
<div class="abs" style="left:853px;top:8.5px;width:1px;height:6px;background:#a6a4a2;"></div>
<div class="abs" style="left:820px;top:6px;width:5px;height:11px;background:#737373;"></div>
<div class="abs" style="left:908px;top:10.5px;width:8px;height:1px;background:#444;"></div>
<div class="abs" style="left:911.5px;top:7px;width:1px;height:8px;background:#444;"></div>
<span class="t" style="left:928.97px;top:5.84px;font-size:12px;transform:scaleX(0.8788);">41%</span>
<svg style="left:962px;top:2px" width="15" height="16" viewBox="0 0 15 16" fill="none"><rect x="4" y="4.500" width="7" height="7" stroke="#444" stroke-width="1"/><path d="M5.500 2.500l2-2l2 2M5.500 13.500l2 2l2-2M2.500 6l-2 2l2 2M12.500 6l2 2l-2 2" stroke="#444" stroke-width="1"/></svg>
<div class="abs" style="left:0px;top:21px;width:993px;height:1px;background:#fafafa;"></div>
</div>

<div class="edge" style="left:0;top:35px;width:1px;height:612px;"></div>
<div class="edge" style="left:994px;top:35px;width:1px;height:612px;"></div>
<div class="edge" style="left:0;top:646px;width:995px;height:1px;"></div>
</div>
</body>
</html>
